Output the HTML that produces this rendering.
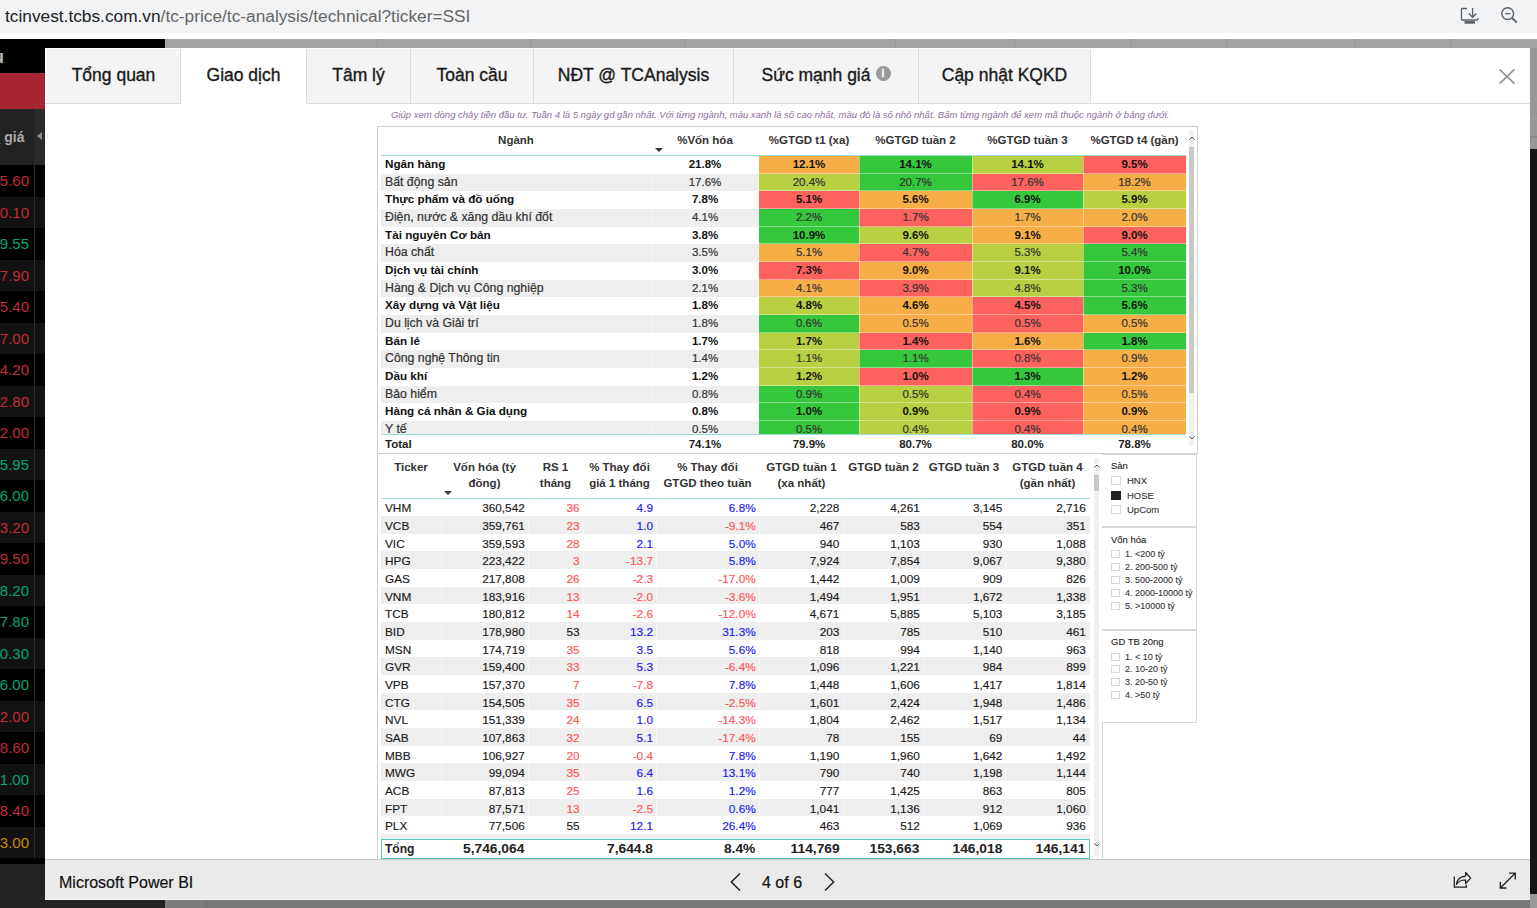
<!DOCTYPE html><html><head><meta charset="utf-8"><style>
*{box-sizing:border-box;margin:0;padding:0}
html,body{width:1537px;height:908px;overflow:hidden}
body{position:relative;background:#a4a4a4;font-family:"Liberation Sans",sans-serif;color:#222}
.abs{position:absolute}
#addr{left:0;top:0;width:1537px;height:33px;background:#f1f3f4}
#url{left:5px;top:6px;font-size:17.3px;line-height:20px;color:#666;white-space:nowrap}
#url b{font-weight:normal;color:#202124}
#wstrip{left:0;top:33px;width:1537px;height:6px;background:#fff}
#side{left:0;top:39px;width:165px;height:869px;background:#222;overflow:hidden}
.srow{position:absolute;left:0;width:165px;height:31.5px}
.snum{position:absolute;right:136px;font-size:15px;line-height:16px;top:8px;white-space:nowrap}
#modal{left:45px;top:48px;width:1485px;height:852px;background:#fff;overflow:hidden}
#tabs{left:0;top:0;width:1485px;height:56px;border-bottom:1px solid #dcdcdc}
.tab{position:absolute;top:1px;height:55px;background:#f4f4f4;border-right:1px solid #dcdcdc;border-bottom:1px solid #dcdcdc;font-size:17.5px;color:#1a1a1a;-webkit-text-stroke:0.35px #1a1a1a;text-align:center;line-height:53px;white-space:nowrap}
.tab.act{background:#fff;border-bottom-color:#fff}
#desc{left:346px;top:61px;width:780px;font-size:9.5px;font-style:italic;color:#8f6f9a;white-space:nowrap;line-height:12px}
.box{position:absolute;border:1px solid #d0d0d0;background:#fff}
table{border-collapse:collapse;table-layout:fixed}
td,th{padding:0;white-space:nowrap;overflow:hidden}
</style></head><body>
<div id="addr" class="abs"></div>
<div id="url" class="abs"><b>tcinvest.tcbs.com.vn</b>/tc-price/tc-analysis/technical?ticker=SSI</div>
<svg class="abs" style="left:1455px;top:0px" width="30" height="24" viewBox="0 0 30 24">
<path d="M12 8.5 H7.2 Q6.5 8.5 6.5 9.2 V19.3 Q6.5 20 7.2 20 H22.3 Q23 20 23 19.3 V17.8" fill="none" stroke="#5f6368" stroke-width="1.3"/>
<path d="M17.6 8 V17" stroke="#5f6368" stroke-width="1.3"/><path d="M13.8 13.5 L17.6 17.3 L21.4 13.5" fill="none" stroke="#5f6368" stroke-width="1.3"/>
<rect x="9.5" y="21" width="10.5" height="2.7" fill="#5f6368"/></svg>
<svg class="abs" style="left:1497px;top:4px" width="24" height="24" viewBox="0 0 24 24">
<circle cx="10.7" cy="9.6" r="5.9" fill="none" stroke="#5f6368" stroke-width="1.4"/><path d="M8.2 9.6 H13.2" stroke="#5f6368" stroke-width="1.4"/>
<path d="M14.9 13.8 L19.8 18.6" stroke="#5f6368" stroke-width="1.9"/></svg>
<div id="wstrip" class="abs"></div>
<div id="side" class="abs">
<div class="abs" style="left:0;top:0;width:165px;height:34px;background:#000"></div>
<div class="abs" style="left:-7px;top:8px;font-size:18px;color:#bbb;font-weight:bold">u</div>
<div class="abs" style="left:0;top:34px;width:165px;height:36px;background:linear-gradient(90deg,#a82534,#a32431 80%,#981c28)"></div>
<div class="abs" style="left:0;top:70px;width:165px;height:56px;background:#222"></div>
<div class="abs" style="left:34px;top:70px;width:131px;height:56px;background:#2a2a2a"></div>
<div class="abs" style="left:-3.5px;top:90px;font-size:14px;font-weight:bold;color:#aaa;white-space:nowrap"><span style="text-decoration:underline">i</span> giá</div>
<div class="abs" style="left:37px;top:93px;width:0;height:0;border-top:4.5px solid transparent;border-bottom:4.5px solid transparent;border-right:5px solid #888"></div>
<div class="srow" style="top:126.0px;background:#000"><span class="snum" style="color:#c22a35">5.60</span></div>
<div class="srow" style="top:157.5px;background:#121212"><span class="snum" style="color:#c22a35">0.10</span></div>
<div class="srow" style="top:189.0px;background:#000"><span class="snum" style="color:#00a577">9.55</span></div>
<div class="srow" style="top:220.5px;background:#121212"><span class="snum" style="color:#c22a35">7.90</span></div>
<div class="srow" style="top:252.0px;background:#000"><span class="snum" style="color:#c22a35">5.40</span></div>
<div class="srow" style="top:283.5px;background:#121212"><span class="snum" style="color:#c22a35">7.00</span></div>
<div class="srow" style="top:315.0px;background:#000"><span class="snum" style="color:#c22a35">4.20</span></div>
<div class="srow" style="top:346.5px;background:#121212"><span class="snum" style="color:#c22a35">2.80</span></div>
<div class="srow" style="top:378.0px;background:#000"><span class="snum" style="color:#c22a35">2.00</span></div>
<div class="srow" style="top:409.5px;background:#121212"><span class="snum" style="color:#00a577">5.95</span></div>
<div class="srow" style="top:441.0px;background:#000"><span class="snum" style="color:#00a577">6.00</span></div>
<div class="srow" style="top:472.5px;background:#121212"><span class="snum" style="color:#c22a35">3.20</span></div>
<div class="srow" style="top:504.0px;background:#000"><span class="snum" style="color:#c22a35">9.50</span></div>
<div class="srow" style="top:535.5px;background:#121212"><span class="snum" style="color:#00a577">8.20</span></div>
<div class="srow" style="top:567.0px;background:#000"><span class="snum" style="color:#00a577">7.80</span></div>
<div class="srow" style="top:598.5px;background:#121212"><span class="snum" style="color:#00a577">0.30</span></div>
<div class="srow" style="top:630.0px;background:#000"><span class="snum" style="color:#00a577">6.00</span></div>
<div class="srow" style="top:661.5px;background:#121212"><span class="snum" style="color:#c22a35">2.00</span></div>
<div class="srow" style="top:693.0px;background:#000"><span class="snum" style="color:#c22a35">8.60</span></div>
<div class="srow" style="top:724.5px;background:#121212"><span class="snum" style="color:#00a577">1.00</span></div>
<div class="srow" style="top:756.0px;background:#000"><span class="snum" style="color:#c22a35">8.40</span></div>
<div class="srow" style="top:787.5px;background:#121212"><span class="snum" style="color:#c8870e">3.00</span></div>
<div class="abs" style="left:34px;top:126px;width:1px;height:699px;background:#2b2b2b"></div>
<div class="abs" style="left:0;top:819px;width:165px;height:6px;background:#000"></div>
</div>
<div class="abs" style="left:1530px;top:48px;width:7px;height:101px;background:#979797"></div>
<div class="abs" style="left:1530px;top:149px;width:7px;height:745px;background:#151515"></div>
<div class="abs" style="left:1530px;top:113px;width:7px;height:1px;background:#8e8e8e"></div>
<div class="abs" style="left:1530px;top:136px;width:7px;height:2px;background:#8a8a8a"></div>
<div class="abs" style="left:165px;top:900px;width:1365px;height:8px;background:#777"></div>
<div class="abs" style="left:165px;top:900px;width:39px;height:8px;background:#7c7c7c"></div>
<div class="abs" style="left:1530px;top:894px;width:7px;height:14px;background:#999"></div>
<div class="abs" style="left:377px;top:39px;width:1px;height:9px;background:#999"></div>
<div class="abs" style="left:530px;top:39px;width:1px;height:9px;background:#999"></div>
<div class="abs" style="left:684px;top:39px;width:1px;height:9px;background:#999"></div>
<div class="abs" style="left:895px;top:39px;width:1px;height:9px;background:#999"></div>
<div class="abs" style="left:1014px;top:39px;width:1px;height:9px;background:#999"></div>
<div class="abs" style="left:1131px;top:39px;width:1px;height:9px;background:#999"></div>
<div class="abs" style="left:1226px;top:39px;width:1px;height:9px;background:#999"></div>
<div class="abs" style="left:1355px;top:39px;width:1px;height:9px;background:#999"></div>
<div class="abs" style="left:1450px;top:39px;width:1px;height:9px;background:#999"></div>
<div id="modal" class="abs">
<div id="tabs" class="abs"></div>
<div class="tab" style="left:2px;width:134px">Tổng quan</div>
<div class="tab act" style="left:136px;width:126px">Giao dịch</div>
<div class="tab" style="left:262px;width:104px">Tâm lý</div>
<div class="tab" style="left:366px;width:123px">Toàn cầu</div>
<div class="tab" style="left:489px;width:200px">NĐT @ TCAnalysis</div>
<div class="tab" style="left:689px;width:185px">Sức mạnh giá<span style="display:inline-block;width:15px;height:15px;border-radius:7.5px;background:#9a9a9a;color:#fff;-webkit-text-stroke:0.3px #fff;font-size:10px;line-height:15px;font-weight:bold;vertical-align:top;margin-top:17px;margin-left:5px;text-align:center">i</span></div>
<div class="tab" style="left:874px;width:172px">Cập nhật KQKD</div>
<svg class="abs" style="left:1452px;top:19px" width="20" height="20" viewBox="0 0 20 20"><path d="M2.6 2.4 L17.4 16.6 M17.4 2.4 L2.6 16.6" stroke="#999" stroke-width="1.9"/></svg>
<div id="desc" class="abs">Giúp xem dòng chảy tiền đầu tư. Tuần 4 là 5 ngày gd gần nhất. Với từng ngành, màu xanh là số cao nhất, màu đỏ là số nhỏ nhất. Bấm từng ngành để xem mã thuộc ngành ở bảng dưới.</div>
</div>
<div class="box" style="left:377px;top:126px;width:821px;height:328px"></div>
<div class="abs" style="left:381px;top:132px;width:270px;text-align:center;font-size:11.5px;line-height:16px;font-weight:bold;color:#333;white-space:nowrap">Ngành</div>
<div class="abs" style="left:651px;top:132px;width:108px;text-align:center;font-size:11.5px;line-height:16px;font-weight:bold;color:#333;white-space:nowrap">%Vốn hóa</div>
<div class="abs" style="left:759px;top:132px;width:100px;text-align:center;font-size:11.5px;line-height:16px;font-weight:bold;color:#333;white-space:nowrap">%GTGD t1 (xa)</div>
<div class="abs" style="left:859px;top:132px;width:113px;text-align:center;font-size:11.5px;line-height:16px;font-weight:bold;color:#333;white-space:nowrap">%GTGD tuần 2</div>
<div class="abs" style="left:972px;top:132px;width:111px;text-align:center;font-size:11.5px;line-height:16px;font-weight:bold;color:#333;white-space:nowrap">%GTGD tuần 3</div>
<div class="abs" style="left:1083px;top:132px;width:103px;text-align:center;font-size:11.5px;line-height:16px;font-weight:bold;color:#333;white-space:nowrap">%GTGD t4 (gần)</div>
<div class="abs" style="left:655px;top:148px;width:0;height:0;border-left:4px solid transparent;border-right:4px solid transparent;border-top:4px solid #333"></div>
<div class="abs" style="left:381px;top:155px;width:805px;height:1px;background:#9adfd9"></div>
<div class="abs" style="left:381px;top:156px;width:378px;height:18px;background:#fff;overflow:hidden"><div class="abs" style="left:4px;top:0px;font-size:11.7px;line-height:16px;font-weight:bold;color:#111;white-space:nowrap">Ngân hàng</div><div class="abs" style="left:270px;top:0;width:108px;height:100%;"><div style="text-align:center;font-size:11.5px;line-height:16px;padding-top:0px;font-weight:bold;color:#111;">21.8%</div></div><div class="abs" style="left:270px;top:0;width:1px;height:100%;background:rgba(255,255,255,0.5)"></div></div>
<div class="abs" style="left:759px;top:156px;width:100px;height:18px;background:#f8ae47;overflow:hidden;text-align:center;font-size:11.5px;line-height:16px;padding-top:0px;font-weight:bold;color:#111;">12.1%</div>
<div class="abs" style="left:859px;top:156px;width:113px;height:18px;background:#35c83c;overflow:hidden;text-align:center;font-size:11.5px;line-height:16px;padding-top:0px;font-weight:bold;color:#111;">14.1%</div>
<div class="abs" style="left:972px;top:156px;width:111px;height:18px;background:#b8d042;overflow:hidden;text-align:center;font-size:11.5px;line-height:16px;padding-top:0px;font-weight:bold;color:#111;">14.1%</div>
<div class="abs" style="left:1083px;top:156px;width:103px;height:18px;background:#fe625e;overflow:hidden;text-align:center;font-size:11.5px;line-height:16px;padding-top:0px;font-weight:bold;color:#111;">9.5%</div>
<div class="abs" style="left:759px;top:173px;width:427px;height:1px;background:rgba(255,255,255,0.4)"></div>
<div class="abs" style="left:381px;top:174px;width:378px;height:17px;background:#eeeeee;overflow:hidden"><div class="abs" style="left:4px;top:0px;font-size:12.3px;line-height:16px;font-weight:normal;color:#333;-webkit-text-stroke:0.2px #333;white-space:nowrap">Bất động sản</div><div class="abs" style="left:270px;top:0;width:108px;height:100%;"><div style="text-align:center;font-size:11.5px;line-height:16px;padding-top:0px;font-weight:normal;color:#333;-webkit-text-stroke:0.2px #333;">17.6%</div></div><div class="abs" style="left:270px;top:0;width:1px;height:100%;background:rgba(255,255,255,0.5)"></div></div>
<div class="abs" style="left:759px;top:174px;width:100px;height:17px;background:#b8d042;overflow:hidden;text-align:center;font-size:11.5px;line-height:16px;padding-top:0px;font-weight:normal;color:#333;-webkit-text-stroke:0.2px #333;">20.4%</div>
<div class="abs" style="left:859px;top:174px;width:113px;height:17px;background:#35c83c;overflow:hidden;text-align:center;font-size:11.5px;line-height:16px;padding-top:0px;font-weight:normal;color:#333;-webkit-text-stroke:0.2px #333;">20.7%</div>
<div class="abs" style="left:972px;top:174px;width:111px;height:17px;background:#fe625e;overflow:hidden;text-align:center;font-size:11.5px;line-height:16px;padding-top:0px;font-weight:normal;color:#333;-webkit-text-stroke:0.2px #333;">17.6%</div>
<div class="abs" style="left:1083px;top:174px;width:103px;height:17px;background:#f8ae47;overflow:hidden;text-align:center;font-size:11.5px;line-height:16px;padding-top:0px;font-weight:normal;color:#333;-webkit-text-stroke:0.2px #333;">18.2%</div>
<div class="abs" style="left:759px;top:190px;width:427px;height:1px;background:rgba(255,255,255,0.4)"></div>
<div class="abs" style="left:381px;top:191px;width:378px;height:18px;background:#fff;overflow:hidden"><div class="abs" style="left:4px;top:0px;font-size:11.7px;line-height:16px;font-weight:bold;color:#111;white-space:nowrap">Thực phẩm và đồ uống</div><div class="abs" style="left:270px;top:0;width:108px;height:100%;"><div style="text-align:center;font-size:11.5px;line-height:16px;padding-top:0px;font-weight:bold;color:#111;">7.8%</div></div><div class="abs" style="left:270px;top:0;width:1px;height:100%;background:rgba(255,255,255,0.5)"></div></div>
<div class="abs" style="left:759px;top:191px;width:100px;height:18px;background:#fe625e;overflow:hidden;text-align:center;font-size:11.5px;line-height:16px;padding-top:0px;font-weight:bold;color:#111;">5.1%</div>
<div class="abs" style="left:859px;top:191px;width:113px;height:18px;background:#f8ae47;overflow:hidden;text-align:center;font-size:11.5px;line-height:16px;padding-top:0px;font-weight:bold;color:#111;">5.6%</div>
<div class="abs" style="left:972px;top:191px;width:111px;height:18px;background:#35c83c;overflow:hidden;text-align:center;font-size:11.5px;line-height:16px;padding-top:0px;font-weight:bold;color:#111;">6.9%</div>
<div class="abs" style="left:1083px;top:191px;width:103px;height:18px;background:#b8d042;overflow:hidden;text-align:center;font-size:11.5px;line-height:16px;padding-top:0px;font-weight:bold;color:#111;">5.9%</div>
<div class="abs" style="left:759px;top:208px;width:427px;height:1px;background:rgba(255,255,255,0.4)"></div>
<div class="abs" style="left:381px;top:209px;width:378px;height:18px;background:#eeeeee;overflow:hidden"><div class="abs" style="left:4px;top:0px;font-size:12.3px;line-height:16px;font-weight:normal;color:#333;-webkit-text-stroke:0.2px #333;white-space:nowrap">Điện, nước & xăng dầu khí đốt</div><div class="abs" style="left:270px;top:0;width:108px;height:100%;"><div style="text-align:center;font-size:11.5px;line-height:16px;padding-top:0px;font-weight:normal;color:#333;-webkit-text-stroke:0.2px #333;">4.1%</div></div><div class="abs" style="left:270px;top:0;width:1px;height:100%;background:rgba(255,255,255,0.5)"></div></div>
<div class="abs" style="left:759px;top:209px;width:100px;height:18px;background:#35c83c;overflow:hidden;text-align:center;font-size:11.5px;line-height:16px;padding-top:0px;font-weight:normal;color:#333;-webkit-text-stroke:0.2px #333;">2.2%</div>
<div class="abs" style="left:859px;top:209px;width:113px;height:18px;background:#fe625e;overflow:hidden;text-align:center;font-size:11.5px;line-height:16px;padding-top:0px;font-weight:normal;color:#333;-webkit-text-stroke:0.2px #333;">1.7%</div>
<div class="abs" style="left:972px;top:209px;width:111px;height:18px;background:#f8ae47;overflow:hidden;text-align:center;font-size:11.5px;line-height:16px;padding-top:0px;font-weight:normal;color:#333;-webkit-text-stroke:0.2px #333;">1.7%</div>
<div class="abs" style="left:1083px;top:209px;width:103px;height:18px;background:#f8ae47;overflow:hidden;text-align:center;font-size:11.5px;line-height:16px;padding-top:0px;font-weight:normal;color:#333;-webkit-text-stroke:0.2px #333;">2.0%</div>
<div class="abs" style="left:759px;top:226px;width:427px;height:1px;background:rgba(255,255,255,0.4)"></div>
<div class="abs" style="left:381px;top:227px;width:378px;height:17px;background:#fff;overflow:hidden"><div class="abs" style="left:4px;top:0px;font-size:11.7px;line-height:16px;font-weight:bold;color:#111;white-space:nowrap">Tài nguyên Cơ bản</div><div class="abs" style="left:270px;top:0;width:108px;height:100%;"><div style="text-align:center;font-size:11.5px;line-height:16px;padding-top:0px;font-weight:bold;color:#111;">3.8%</div></div><div class="abs" style="left:270px;top:0;width:1px;height:100%;background:rgba(255,255,255,0.5)"></div></div>
<div class="abs" style="left:759px;top:227px;width:100px;height:17px;background:#35c83c;overflow:hidden;text-align:center;font-size:11.5px;line-height:16px;padding-top:0px;font-weight:bold;color:#111;">10.9%</div>
<div class="abs" style="left:859px;top:227px;width:113px;height:17px;background:#b8d042;overflow:hidden;text-align:center;font-size:11.5px;line-height:16px;padding-top:0px;font-weight:bold;color:#111;">9.6%</div>
<div class="abs" style="left:972px;top:227px;width:111px;height:17px;background:#f8ae47;overflow:hidden;text-align:center;font-size:11.5px;line-height:16px;padding-top:0px;font-weight:bold;color:#111;">9.1%</div>
<div class="abs" style="left:1083px;top:227px;width:103px;height:17px;background:#fe625e;overflow:hidden;text-align:center;font-size:11.5px;line-height:16px;padding-top:0px;font-weight:bold;color:#111;">9.0%</div>
<div class="abs" style="left:759px;top:243px;width:427px;height:1px;background:rgba(255,255,255,0.4)"></div>
<div class="abs" style="left:381px;top:244px;width:378px;height:18px;background:#eeeeee;overflow:hidden"><div class="abs" style="left:4px;top:0px;font-size:12.3px;line-height:16px;font-weight:normal;color:#333;-webkit-text-stroke:0.2px #333;white-space:nowrap">Hóa chất</div><div class="abs" style="left:270px;top:0;width:108px;height:100%;"><div style="text-align:center;font-size:11.5px;line-height:16px;padding-top:0px;font-weight:normal;color:#333;-webkit-text-stroke:0.2px #333;">3.5%</div></div><div class="abs" style="left:270px;top:0;width:1px;height:100%;background:rgba(255,255,255,0.5)"></div></div>
<div class="abs" style="left:759px;top:244px;width:100px;height:18px;background:#f8ae47;overflow:hidden;text-align:center;font-size:11.5px;line-height:16px;padding-top:0px;font-weight:normal;color:#333;-webkit-text-stroke:0.2px #333;">5.1%</div>
<div class="abs" style="left:859px;top:244px;width:113px;height:18px;background:#fe625e;overflow:hidden;text-align:center;font-size:11.5px;line-height:16px;padding-top:0px;font-weight:normal;color:#333;-webkit-text-stroke:0.2px #333;">4.7%</div>
<div class="abs" style="left:972px;top:244px;width:111px;height:18px;background:#b8d042;overflow:hidden;text-align:center;font-size:11.5px;line-height:16px;padding-top:0px;font-weight:normal;color:#333;-webkit-text-stroke:0.2px #333;">5.3%</div>
<div class="abs" style="left:1083px;top:244px;width:103px;height:18px;background:#35c83c;overflow:hidden;text-align:center;font-size:11.5px;line-height:16px;padding-top:0px;font-weight:normal;color:#333;-webkit-text-stroke:0.2px #333;">5.4%</div>
<div class="abs" style="left:759px;top:261px;width:427px;height:1px;background:rgba(255,255,255,0.4)"></div>
<div class="abs" style="left:381px;top:262px;width:378px;height:18px;background:#fff;overflow:hidden"><div class="abs" style="left:4px;top:0px;font-size:11.7px;line-height:16px;font-weight:bold;color:#111;white-space:nowrap">Dịch vụ tài chính</div><div class="abs" style="left:270px;top:0;width:108px;height:100%;"><div style="text-align:center;font-size:11.5px;line-height:16px;padding-top:0px;font-weight:bold;color:#111;">3.0%</div></div><div class="abs" style="left:270px;top:0;width:1px;height:100%;background:rgba(255,255,255,0.5)"></div></div>
<div class="abs" style="left:759px;top:262px;width:100px;height:18px;background:#fe625e;overflow:hidden;text-align:center;font-size:11.5px;line-height:16px;padding-top:0px;font-weight:bold;color:#111;">7.3%</div>
<div class="abs" style="left:859px;top:262px;width:113px;height:18px;background:#f8ae47;overflow:hidden;text-align:center;font-size:11.5px;line-height:16px;padding-top:0px;font-weight:bold;color:#111;">9.0%</div>
<div class="abs" style="left:972px;top:262px;width:111px;height:18px;background:#b8d042;overflow:hidden;text-align:center;font-size:11.5px;line-height:16px;padding-top:0px;font-weight:bold;color:#111;">9.1%</div>
<div class="abs" style="left:1083px;top:262px;width:103px;height:18px;background:#35c83c;overflow:hidden;text-align:center;font-size:11.5px;line-height:16px;padding-top:0px;font-weight:bold;color:#111;">10.0%</div>
<div class="abs" style="left:759px;top:279px;width:427px;height:1px;background:rgba(255,255,255,0.4)"></div>
<div class="abs" style="left:381px;top:280px;width:378px;height:17px;background:#eeeeee;overflow:hidden"><div class="abs" style="left:4px;top:0px;font-size:12.3px;line-height:16px;font-weight:normal;color:#333;-webkit-text-stroke:0.2px #333;white-space:nowrap">Hàng & Dịch vụ Công nghiệp</div><div class="abs" style="left:270px;top:0;width:108px;height:100%;"><div style="text-align:center;font-size:11.5px;line-height:16px;padding-top:0px;font-weight:normal;color:#333;-webkit-text-stroke:0.2px #333;">2.1%</div></div><div class="abs" style="left:270px;top:0;width:1px;height:100%;background:rgba(255,255,255,0.5)"></div></div>
<div class="abs" style="left:759px;top:280px;width:100px;height:17px;background:#f8ae47;overflow:hidden;text-align:center;font-size:11.5px;line-height:16px;padding-top:0px;font-weight:normal;color:#333;-webkit-text-stroke:0.2px #333;">4.1%</div>
<div class="abs" style="left:859px;top:280px;width:113px;height:17px;background:#fe625e;overflow:hidden;text-align:center;font-size:11.5px;line-height:16px;padding-top:0px;font-weight:normal;color:#333;-webkit-text-stroke:0.2px #333;">3.9%</div>
<div class="abs" style="left:972px;top:280px;width:111px;height:17px;background:#b8d042;overflow:hidden;text-align:center;font-size:11.5px;line-height:16px;padding-top:0px;font-weight:normal;color:#333;-webkit-text-stroke:0.2px #333;">4.8%</div>
<div class="abs" style="left:1083px;top:280px;width:103px;height:17px;background:#35c83c;overflow:hidden;text-align:center;font-size:11.5px;line-height:16px;padding-top:0px;font-weight:normal;color:#333;-webkit-text-stroke:0.2px #333;">5.3%</div>
<div class="abs" style="left:759px;top:296px;width:427px;height:1px;background:rgba(255,255,255,0.4)"></div>
<div class="abs" style="left:381px;top:297px;width:378px;height:18px;background:#fff;overflow:hidden"><div class="abs" style="left:4px;top:0px;font-size:11.7px;line-height:16px;font-weight:bold;color:#111;white-space:nowrap">Xây dựng và Vật liệu</div><div class="abs" style="left:270px;top:0;width:108px;height:100%;"><div style="text-align:center;font-size:11.5px;line-height:16px;padding-top:0px;font-weight:bold;color:#111;">1.8%</div></div><div class="abs" style="left:270px;top:0;width:1px;height:100%;background:rgba(255,255,255,0.5)"></div></div>
<div class="abs" style="left:759px;top:297px;width:100px;height:18px;background:#b8d042;overflow:hidden;text-align:center;font-size:11.5px;line-height:16px;padding-top:0px;font-weight:bold;color:#111;">4.8%</div>
<div class="abs" style="left:859px;top:297px;width:113px;height:18px;background:#f8ae47;overflow:hidden;text-align:center;font-size:11.5px;line-height:16px;padding-top:0px;font-weight:bold;color:#111;">4.6%</div>
<div class="abs" style="left:972px;top:297px;width:111px;height:18px;background:#fe625e;overflow:hidden;text-align:center;font-size:11.5px;line-height:16px;padding-top:0px;font-weight:bold;color:#111;">4.5%</div>
<div class="abs" style="left:1083px;top:297px;width:103px;height:18px;background:#35c83c;overflow:hidden;text-align:center;font-size:11.5px;line-height:16px;padding-top:0px;font-weight:bold;color:#111;">5.6%</div>
<div class="abs" style="left:759px;top:314px;width:427px;height:1px;background:rgba(255,255,255,0.4)"></div>
<div class="abs" style="left:381px;top:315px;width:378px;height:18px;background:#eeeeee;overflow:hidden"><div class="abs" style="left:4px;top:0px;font-size:12.3px;line-height:16px;font-weight:normal;color:#333;-webkit-text-stroke:0.2px #333;white-space:nowrap">Du lịch và Giải trí</div><div class="abs" style="left:270px;top:0;width:108px;height:100%;"><div style="text-align:center;font-size:11.5px;line-height:16px;padding-top:0px;font-weight:normal;color:#333;-webkit-text-stroke:0.2px #333;">1.8%</div></div><div class="abs" style="left:270px;top:0;width:1px;height:100%;background:rgba(255,255,255,0.5)"></div></div>
<div class="abs" style="left:759px;top:315px;width:100px;height:18px;background:#35c83c;overflow:hidden;text-align:center;font-size:11.5px;line-height:16px;padding-top:0px;font-weight:normal;color:#333;-webkit-text-stroke:0.2px #333;">0.6%</div>
<div class="abs" style="left:859px;top:315px;width:113px;height:18px;background:#f8ae47;overflow:hidden;text-align:center;font-size:11.5px;line-height:16px;padding-top:0px;font-weight:normal;color:#333;-webkit-text-stroke:0.2px #333;">0.5%</div>
<div class="abs" style="left:972px;top:315px;width:111px;height:18px;background:#fe625e;overflow:hidden;text-align:center;font-size:11.5px;line-height:16px;padding-top:0px;font-weight:normal;color:#333;-webkit-text-stroke:0.2px #333;">0.5%</div>
<div class="abs" style="left:1083px;top:315px;width:103px;height:18px;background:#f8ae47;overflow:hidden;text-align:center;font-size:11.5px;line-height:16px;padding-top:0px;font-weight:normal;color:#333;-webkit-text-stroke:0.2px #333;">0.5%</div>
<div class="abs" style="left:759px;top:332px;width:427px;height:1px;background:rgba(255,255,255,0.4)"></div>
<div class="abs" style="left:381px;top:333px;width:378px;height:17px;background:#fff;overflow:hidden"><div class="abs" style="left:4px;top:0px;font-size:11.7px;line-height:16px;font-weight:bold;color:#111;white-space:nowrap">Bán lẻ</div><div class="abs" style="left:270px;top:0;width:108px;height:100%;"><div style="text-align:center;font-size:11.5px;line-height:16px;padding-top:0px;font-weight:bold;color:#111;">1.7%</div></div><div class="abs" style="left:270px;top:0;width:1px;height:100%;background:rgba(255,255,255,0.5)"></div></div>
<div class="abs" style="left:759px;top:333px;width:100px;height:17px;background:#b8d042;overflow:hidden;text-align:center;font-size:11.5px;line-height:16px;padding-top:0px;font-weight:bold;color:#111;">1.7%</div>
<div class="abs" style="left:859px;top:333px;width:113px;height:17px;background:#fe625e;overflow:hidden;text-align:center;font-size:11.5px;line-height:16px;padding-top:0px;font-weight:bold;color:#111;">1.4%</div>
<div class="abs" style="left:972px;top:333px;width:111px;height:17px;background:#f8ae47;overflow:hidden;text-align:center;font-size:11.5px;line-height:16px;padding-top:0px;font-weight:bold;color:#111;">1.6%</div>
<div class="abs" style="left:1083px;top:333px;width:103px;height:17px;background:#35c83c;overflow:hidden;text-align:center;font-size:11.5px;line-height:16px;padding-top:0px;font-weight:bold;color:#111;">1.8%</div>
<div class="abs" style="left:759px;top:349px;width:427px;height:1px;background:rgba(255,255,255,0.4)"></div>
<div class="abs" style="left:381px;top:350px;width:378px;height:18px;background:#eeeeee;overflow:hidden"><div class="abs" style="left:4px;top:0px;font-size:12.3px;line-height:16px;font-weight:normal;color:#333;-webkit-text-stroke:0.2px #333;white-space:nowrap">Công nghệ Thông tin</div><div class="abs" style="left:270px;top:0;width:108px;height:100%;"><div style="text-align:center;font-size:11.5px;line-height:16px;padding-top:0px;font-weight:normal;color:#333;-webkit-text-stroke:0.2px #333;">1.4%</div></div><div class="abs" style="left:270px;top:0;width:1px;height:100%;background:rgba(255,255,255,0.5)"></div></div>
<div class="abs" style="left:759px;top:350px;width:100px;height:18px;background:#b8d042;overflow:hidden;text-align:center;font-size:11.5px;line-height:16px;padding-top:0px;font-weight:normal;color:#333;-webkit-text-stroke:0.2px #333;">1.1%</div>
<div class="abs" style="left:859px;top:350px;width:113px;height:18px;background:#35c83c;overflow:hidden;text-align:center;font-size:11.5px;line-height:16px;padding-top:0px;font-weight:normal;color:#333;-webkit-text-stroke:0.2px #333;">1.1%</div>
<div class="abs" style="left:972px;top:350px;width:111px;height:18px;background:#fe625e;overflow:hidden;text-align:center;font-size:11.5px;line-height:16px;padding-top:0px;font-weight:normal;color:#333;-webkit-text-stroke:0.2px #333;">0.8%</div>
<div class="abs" style="left:1083px;top:350px;width:103px;height:18px;background:#f8ae47;overflow:hidden;text-align:center;font-size:11.5px;line-height:16px;padding-top:0px;font-weight:normal;color:#333;-webkit-text-stroke:0.2px #333;">0.9%</div>
<div class="abs" style="left:759px;top:367px;width:427px;height:1px;background:rgba(255,255,255,0.4)"></div>
<div class="abs" style="left:381px;top:368px;width:378px;height:18px;background:#fff;overflow:hidden"><div class="abs" style="left:4px;top:0px;font-size:11.7px;line-height:16px;font-weight:bold;color:#111;white-space:nowrap">Dầu khí</div><div class="abs" style="left:270px;top:0;width:108px;height:100%;"><div style="text-align:center;font-size:11.5px;line-height:16px;padding-top:0px;font-weight:bold;color:#111;">1.2%</div></div><div class="abs" style="left:270px;top:0;width:1px;height:100%;background:rgba(255,255,255,0.5)"></div></div>
<div class="abs" style="left:759px;top:368px;width:100px;height:18px;background:#b8d042;overflow:hidden;text-align:center;font-size:11.5px;line-height:16px;padding-top:0px;font-weight:bold;color:#111;">1.2%</div>
<div class="abs" style="left:859px;top:368px;width:113px;height:18px;background:#fe625e;overflow:hidden;text-align:center;font-size:11.5px;line-height:16px;padding-top:0px;font-weight:bold;color:#111;">1.0%</div>
<div class="abs" style="left:972px;top:368px;width:111px;height:18px;background:#35c83c;overflow:hidden;text-align:center;font-size:11.5px;line-height:16px;padding-top:0px;font-weight:bold;color:#111;">1.3%</div>
<div class="abs" style="left:1083px;top:368px;width:103px;height:18px;background:#f8ae47;overflow:hidden;text-align:center;font-size:11.5px;line-height:16px;padding-top:0px;font-weight:bold;color:#111;">1.2%</div>
<div class="abs" style="left:759px;top:385px;width:427px;height:1px;background:rgba(255,255,255,0.4)"></div>
<div class="abs" style="left:381px;top:386px;width:378px;height:17px;background:#eeeeee;overflow:hidden"><div class="abs" style="left:4px;top:0px;font-size:12.3px;line-height:16px;font-weight:normal;color:#333;-webkit-text-stroke:0.2px #333;white-space:nowrap">Bảo hiểm</div><div class="abs" style="left:270px;top:0;width:108px;height:100%;"><div style="text-align:center;font-size:11.5px;line-height:16px;padding-top:0px;font-weight:normal;color:#333;-webkit-text-stroke:0.2px #333;">0.8%</div></div><div class="abs" style="left:270px;top:0;width:1px;height:100%;background:rgba(255,255,255,0.5)"></div></div>
<div class="abs" style="left:759px;top:386px;width:100px;height:17px;background:#35c83c;overflow:hidden;text-align:center;font-size:11.5px;line-height:16px;padding-top:0px;font-weight:normal;color:#333;-webkit-text-stroke:0.2px #333;">0.9%</div>
<div class="abs" style="left:859px;top:386px;width:113px;height:17px;background:#b8d042;overflow:hidden;text-align:center;font-size:11.5px;line-height:16px;padding-top:0px;font-weight:normal;color:#333;-webkit-text-stroke:0.2px #333;">0.5%</div>
<div class="abs" style="left:972px;top:386px;width:111px;height:17px;background:#fe625e;overflow:hidden;text-align:center;font-size:11.5px;line-height:16px;padding-top:0px;font-weight:normal;color:#333;-webkit-text-stroke:0.2px #333;">0.4%</div>
<div class="abs" style="left:1083px;top:386px;width:103px;height:17px;background:#f8ae47;overflow:hidden;text-align:center;font-size:11.5px;line-height:16px;padding-top:0px;font-weight:normal;color:#333;-webkit-text-stroke:0.2px #333;">0.5%</div>
<div class="abs" style="left:759px;top:402px;width:427px;height:1px;background:rgba(255,255,255,0.4)"></div>
<div class="abs" style="left:381px;top:403px;width:378px;height:18px;background:#fff;overflow:hidden"><div class="abs" style="left:4px;top:0px;font-size:11.7px;line-height:16px;font-weight:bold;color:#111;white-space:nowrap">Hàng cá nhân & Gia dụng</div><div class="abs" style="left:270px;top:0;width:108px;height:100%;"><div style="text-align:center;font-size:11.5px;line-height:16px;padding-top:0px;font-weight:bold;color:#111;">0.8%</div></div><div class="abs" style="left:270px;top:0;width:1px;height:100%;background:rgba(255,255,255,0.5)"></div></div>
<div class="abs" style="left:759px;top:403px;width:100px;height:18px;background:#35c83c;overflow:hidden;text-align:center;font-size:11.5px;line-height:16px;padding-top:0px;font-weight:bold;color:#111;">1.0%</div>
<div class="abs" style="left:859px;top:403px;width:113px;height:18px;background:#b8d042;overflow:hidden;text-align:center;font-size:11.5px;line-height:16px;padding-top:0px;font-weight:bold;color:#111;">0.9%</div>
<div class="abs" style="left:972px;top:403px;width:111px;height:18px;background:#fe625e;overflow:hidden;text-align:center;font-size:11.5px;line-height:16px;padding-top:0px;font-weight:bold;color:#111;">0.9%</div>
<div class="abs" style="left:1083px;top:403px;width:103px;height:18px;background:#f8ae47;overflow:hidden;text-align:center;font-size:11.5px;line-height:16px;padding-top:0px;font-weight:bold;color:#111;">0.9%</div>
<div class="abs" style="left:759px;top:420px;width:427px;height:1px;background:rgba(255,255,255,0.4)"></div>
<div class="abs" style="left:381px;top:421px;width:378px;height:13px;background:#eeeeee;overflow:hidden"><div class="abs" style="left:4px;top:0px;font-size:12.3px;line-height:16px;font-weight:normal;color:#333;-webkit-text-stroke:0.2px #333;white-space:nowrap">Y tế</div><div class="abs" style="left:270px;top:0;width:108px;height:100%;"><div style="text-align:center;font-size:11.5px;line-height:16px;padding-top:0px;font-weight:normal;color:#333;-webkit-text-stroke:0.2px #333;">0.5%</div></div><div class="abs" style="left:270px;top:0;width:1px;height:100%;background:rgba(255,255,255,0.5)"></div></div>
<div class="abs" style="left:759px;top:421px;width:100px;height:13px;background:#35c83c;overflow:hidden;text-align:center;font-size:11.5px;line-height:16px;padding-top:0px;font-weight:normal;color:#333;-webkit-text-stroke:0.2px #333;">0.5%</div>
<div class="abs" style="left:859px;top:421px;width:113px;height:13px;background:#b8d042;overflow:hidden;text-align:center;font-size:11.5px;line-height:16px;padding-top:0px;font-weight:normal;color:#333;-webkit-text-stroke:0.2px #333;">0.4%</div>
<div class="abs" style="left:972px;top:421px;width:111px;height:13px;background:#fe625e;overflow:hidden;text-align:center;font-size:11.5px;line-height:16px;padding-top:0px;font-weight:normal;color:#333;-webkit-text-stroke:0.2px #333;">0.4%</div>
<div class="abs" style="left:1083px;top:421px;width:103px;height:13px;background:#f8ae47;overflow:hidden;text-align:center;font-size:11.5px;line-height:16px;padding-top:0px;font-weight:normal;color:#333;-webkit-text-stroke:0.2px #333;">0.4%</div>
<div class="abs" style="left:859px;top:156px;width:1px;height:278px;background:rgba(255,255,255,0.4)"></div>
<div class="abs" style="left:972px;top:156px;width:1px;height:278px;background:rgba(255,255,255,0.4)"></div>
<div class="abs" style="left:1083px;top:156px;width:1px;height:278px;background:rgba(255,255,255,0.4)"></div>
<div class="abs" style="left:381px;top:434px;width:805px;height:1px;background:#9adfd9"></div>
<div class="abs" style="left:381px;top:436px;width:270px;text-align:left;padding-left:4px;font-size:11.5px;line-height:16px;font-weight:bold;color:#222;white-space:nowrap">Total</div>
<div class="abs" style="left:651px;top:436px;width:108px;text-align:center;font-size:11.5px;line-height:16px;font-weight:bold;color:#222;white-space:nowrap">74.1%</div>
<div class="abs" style="left:759px;top:436px;width:100px;text-align:center;font-size:11.5px;line-height:16px;font-weight:bold;color:#222;white-space:nowrap">79.9%</div>
<div class="abs" style="left:859px;top:436px;width:113px;text-align:center;font-size:11.5px;line-height:16px;font-weight:bold;color:#222;white-space:nowrap">80.7%</div>
<div class="abs" style="left:972px;top:436px;width:111px;text-align:center;font-size:11.5px;line-height:16px;font-weight:bold;color:#222;white-space:nowrap">80.0%</div>
<div class="abs" style="left:1083px;top:436px;width:103px;text-align:center;font-size:11.5px;line-height:16px;font-weight:bold;color:#222;white-space:nowrap">78.8%</div>
<div class="abs" style="left:1189px;top:130px;width:5px;height:316px;background:#f0f0f0"></div>
<div class="abs" style="left:1189px;top:147px;width:5px;height:246px;background:#c8c8c8"></div>
<svg class="abs" style="left:1189px;top:136px" width="6" height="4" viewBox="0 0 6 4"><path d="M0.5 3.5 L3 1 L5.5 3.5" fill="none" stroke="#555" stroke-width="1"/></svg>
<svg class="abs" style="left:1189px;top:436px" width="6" height="4" viewBox="0 0 6 4"><path d="M0.5 0.5 L3 3 L5.5 0.5" fill="none" stroke="#555" stroke-width="1"/></svg>
<div class="abs" style="left:377px;top:454px;width:1px;height:405px;background:#d0d0d0"></div>
<div class="abs" style="left:1102px;top:454px;width:1px;height:405px;background:#d8d8d8"></div>
<div class="abs" style="left:381px;top:459px;width:60px;text-align:center;font-size:11.5px;line-height:16px;font-weight:bold;color:#333;white-space:nowrap">Ticker</div>
<div class="abs" style="left:441px;top:459px;width:87px;text-align:center;font-size:11.5px;line-height:16px;font-weight:bold;color:#333;white-space:nowrap">Vốn hóa (tỷ<br>đồng)</div>
<div class="abs" style="left:528px;top:459px;width:55px;text-align:center;font-size:11.5px;line-height:16px;font-weight:bold;color:#333;white-space:nowrap">RS 1<br>tháng</div>
<div class="abs" style="left:583px;top:459px;width:73px;text-align:center;font-size:11.5px;line-height:16px;font-weight:bold;color:#333;white-space:nowrap">% Thay đổi<br>giá 1 tháng</div>
<div class="abs" style="left:656px;top:459px;width:103px;text-align:center;font-size:11.5px;line-height:16px;font-weight:bold;color:#333;white-space:nowrap">% Thay đổi<br>GTGD theo tuần</div>
<div class="abs" style="left:759px;top:459px;width:85px;text-align:center;font-size:11.5px;line-height:16px;font-weight:bold;color:#333;white-space:nowrap">GTGD tuần 1<br>(xa nhất)</div>
<div class="abs" style="left:844px;top:459px;width:79px;text-align:center;font-size:11.5px;line-height:16px;font-weight:bold;color:#333;white-space:nowrap">GTGD tuần 2</div>
<div class="abs" style="left:923px;top:459px;width:82px;text-align:center;font-size:11.5px;line-height:16px;font-weight:bold;color:#333;white-space:nowrap">GTGD tuần 3</div>
<div class="abs" style="left:1005px;top:459px;width:85px;text-align:center;font-size:11.5px;line-height:16px;font-weight:bold;color:#333;white-space:nowrap">GTGD tuần 4<br>(gần nhất)</div>
<div class="abs" style="left:444px;top:491px;width:0;height:0;border-left:4px solid transparent;border-right:4px solid transparent;border-top:4px solid #333"></div>
<div class="abs" style="left:381px;top:498px;width:709px;height:18px;background:#fff"></div>
<div class="abs" style="left:381px;top:500px;width:60px;text-align:left;padding-left:4px;font-size:11.8px;line-height:16px;color:#1a1a1a;-webkit-text-stroke:0.15px #1a1a1a;white-space:nowrap">VHM</div>
<div class="abs" style="left:441px;top:500px;width:87px;text-align:right;padding-right:3.2px;font-size:11.8px;line-height:16px;color:#1a1a1a;-webkit-text-stroke:0.15px #1a1a1a;white-space:nowrap">360,542</div>
<div class="abs" style="left:528px;top:500px;width:55px;text-align:right;padding-right:3.5px;font-size:11.8px;line-height:16px;color:#ff5656;-webkit-text-stroke:0.15px #ff5656;white-space:nowrap">36</div>
<div class="abs" style="left:583px;top:500px;width:73px;text-align:right;padding-right:3.0px;font-size:11.8px;line-height:16px;color:#2020f0;-webkit-text-stroke:0.15px #2020f0;white-space:nowrap">4.9</div>
<div class="abs" style="left:656px;top:500px;width:103px;text-align:right;padding-right:3.3px;font-size:11.8px;line-height:16px;color:#2020f0;-webkit-text-stroke:0.15px #2020f0;white-space:nowrap">6.8%</div>
<div class="abs" style="left:759px;top:500px;width:85px;text-align:right;padding-right:4.7px;font-size:11.8px;line-height:16px;color:#1a1a1a;-webkit-text-stroke:0.15px #1a1a1a;white-space:nowrap">2,228</div>
<div class="abs" style="left:844px;top:500px;width:79px;text-align:right;padding-right:3.2px;font-size:11.8px;line-height:16px;color:#1a1a1a;-webkit-text-stroke:0.15px #1a1a1a;white-space:nowrap">4,261</div>
<div class="abs" style="left:923px;top:500px;width:82px;text-align:right;padding-right:2.6px;font-size:11.8px;line-height:16px;color:#1a1a1a;-webkit-text-stroke:0.15px #1a1a1a;white-space:nowrap">3,145</div>
<div class="abs" style="left:1005px;top:500px;width:85px;text-align:right;padding-right:4.2px;font-size:11.8px;line-height:16px;color:#1a1a1a;-webkit-text-stroke:0.15px #1a1a1a;white-space:nowrap">2,716</div>
<div class="abs" style="left:381px;top:516px;width:709px;height:18px;background:#eeeeee"></div>
<div class="abs" style="left:381px;top:518px;width:60px;text-align:left;padding-left:4px;font-size:11.8px;line-height:16px;color:#1a1a1a;-webkit-text-stroke:0.15px #1a1a1a;white-space:nowrap">VCB</div>
<div class="abs" style="left:441px;top:518px;width:87px;text-align:right;padding-right:3.2px;font-size:11.8px;line-height:16px;color:#1a1a1a;-webkit-text-stroke:0.15px #1a1a1a;white-space:nowrap">359,761</div>
<div class="abs" style="left:528px;top:518px;width:55px;text-align:right;padding-right:3.5px;font-size:11.8px;line-height:16px;color:#ff5656;-webkit-text-stroke:0.15px #ff5656;white-space:nowrap">23</div>
<div class="abs" style="left:583px;top:518px;width:73px;text-align:right;padding-right:3.0px;font-size:11.8px;line-height:16px;color:#2020f0;-webkit-text-stroke:0.15px #2020f0;white-space:nowrap">1.0</div>
<div class="abs" style="left:656px;top:518px;width:103px;text-align:right;padding-right:3.3px;font-size:11.8px;line-height:16px;color:#ff5656;-webkit-text-stroke:0.15px #ff5656;white-space:nowrap">-9.1%</div>
<div class="abs" style="left:759px;top:518px;width:85px;text-align:right;padding-right:4.7px;font-size:11.8px;line-height:16px;color:#1a1a1a;-webkit-text-stroke:0.15px #1a1a1a;white-space:nowrap">467</div>
<div class="abs" style="left:844px;top:518px;width:79px;text-align:right;padding-right:3.2px;font-size:11.8px;line-height:16px;color:#1a1a1a;-webkit-text-stroke:0.15px #1a1a1a;white-space:nowrap">583</div>
<div class="abs" style="left:923px;top:518px;width:82px;text-align:right;padding-right:2.6px;font-size:11.8px;line-height:16px;color:#1a1a1a;-webkit-text-stroke:0.15px #1a1a1a;white-space:nowrap">554</div>
<div class="abs" style="left:1005px;top:518px;width:85px;text-align:right;padding-right:4.2px;font-size:11.8px;line-height:16px;color:#1a1a1a;-webkit-text-stroke:0.15px #1a1a1a;white-space:nowrap">351</div>
<div class="abs" style="left:441px;top:516px;width:1px;height:18px;background:#f6f6f6"></div>
<div class="abs" style="left:528px;top:516px;width:1px;height:18px;background:#f6f6f6"></div>
<div class="abs" style="left:583px;top:516px;width:1px;height:18px;background:#f6f6f6"></div>
<div class="abs" style="left:656px;top:516px;width:1px;height:18px;background:#f6f6f6"></div>
<div class="abs" style="left:759px;top:516px;width:1px;height:18px;background:#f6f6f6"></div>
<div class="abs" style="left:844px;top:516px;width:1px;height:18px;background:#f6f6f6"></div>
<div class="abs" style="left:923px;top:516px;width:1px;height:18px;background:#f6f6f6"></div>
<div class="abs" style="left:1005px;top:516px;width:1px;height:18px;background:#f6f6f6"></div>
<div class="abs" style="left:381px;top:534px;width:709px;height:17px;background:#fff"></div>
<div class="abs" style="left:381px;top:536px;width:60px;text-align:left;padding-left:4px;font-size:11.8px;line-height:16px;color:#1a1a1a;-webkit-text-stroke:0.15px #1a1a1a;white-space:nowrap">VIC</div>
<div class="abs" style="left:441px;top:536px;width:87px;text-align:right;padding-right:3.2px;font-size:11.8px;line-height:16px;color:#1a1a1a;-webkit-text-stroke:0.15px #1a1a1a;white-space:nowrap">359,593</div>
<div class="abs" style="left:528px;top:536px;width:55px;text-align:right;padding-right:3.5px;font-size:11.8px;line-height:16px;color:#ff5656;-webkit-text-stroke:0.15px #ff5656;white-space:nowrap">28</div>
<div class="abs" style="left:583px;top:536px;width:73px;text-align:right;padding-right:3.0px;font-size:11.8px;line-height:16px;color:#2020f0;-webkit-text-stroke:0.15px #2020f0;white-space:nowrap">2.1</div>
<div class="abs" style="left:656px;top:536px;width:103px;text-align:right;padding-right:3.3px;font-size:11.8px;line-height:16px;color:#2020f0;-webkit-text-stroke:0.15px #2020f0;white-space:nowrap">5.0%</div>
<div class="abs" style="left:759px;top:536px;width:85px;text-align:right;padding-right:4.7px;font-size:11.8px;line-height:16px;color:#1a1a1a;-webkit-text-stroke:0.15px #1a1a1a;white-space:nowrap">940</div>
<div class="abs" style="left:844px;top:536px;width:79px;text-align:right;padding-right:3.2px;font-size:11.8px;line-height:16px;color:#1a1a1a;-webkit-text-stroke:0.15px #1a1a1a;white-space:nowrap">1,103</div>
<div class="abs" style="left:923px;top:536px;width:82px;text-align:right;padding-right:2.6px;font-size:11.8px;line-height:16px;color:#1a1a1a;-webkit-text-stroke:0.15px #1a1a1a;white-space:nowrap">930</div>
<div class="abs" style="left:1005px;top:536px;width:85px;text-align:right;padding-right:4.2px;font-size:11.8px;line-height:16px;color:#1a1a1a;-webkit-text-stroke:0.15px #1a1a1a;white-space:nowrap">1,088</div>
<div class="abs" style="left:381px;top:551px;width:709px;height:18px;background:#eeeeee"></div>
<div class="abs" style="left:381px;top:553px;width:60px;text-align:left;padding-left:4px;font-size:11.8px;line-height:16px;color:#1a1a1a;-webkit-text-stroke:0.15px #1a1a1a;white-space:nowrap">HPG</div>
<div class="abs" style="left:441px;top:553px;width:87px;text-align:right;padding-right:3.2px;font-size:11.8px;line-height:16px;color:#1a1a1a;-webkit-text-stroke:0.15px #1a1a1a;white-space:nowrap">223,422</div>
<div class="abs" style="left:528px;top:553px;width:55px;text-align:right;padding-right:3.5px;font-size:11.8px;line-height:16px;color:#ff5656;-webkit-text-stroke:0.15px #ff5656;white-space:nowrap">3</div>
<div class="abs" style="left:583px;top:553px;width:73px;text-align:right;padding-right:3.0px;font-size:11.8px;line-height:16px;color:#ff5656;-webkit-text-stroke:0.15px #ff5656;white-space:nowrap">-13.7</div>
<div class="abs" style="left:656px;top:553px;width:103px;text-align:right;padding-right:3.3px;font-size:11.8px;line-height:16px;color:#2020f0;-webkit-text-stroke:0.15px #2020f0;white-space:nowrap">5.8%</div>
<div class="abs" style="left:759px;top:553px;width:85px;text-align:right;padding-right:4.7px;font-size:11.8px;line-height:16px;color:#1a1a1a;-webkit-text-stroke:0.15px #1a1a1a;white-space:nowrap">7,924</div>
<div class="abs" style="left:844px;top:553px;width:79px;text-align:right;padding-right:3.2px;font-size:11.8px;line-height:16px;color:#1a1a1a;-webkit-text-stroke:0.15px #1a1a1a;white-space:nowrap">7,854</div>
<div class="abs" style="left:923px;top:553px;width:82px;text-align:right;padding-right:2.6px;font-size:11.8px;line-height:16px;color:#1a1a1a;-webkit-text-stroke:0.15px #1a1a1a;white-space:nowrap">9,067</div>
<div class="abs" style="left:1005px;top:553px;width:85px;text-align:right;padding-right:4.2px;font-size:11.8px;line-height:16px;color:#1a1a1a;-webkit-text-stroke:0.15px #1a1a1a;white-space:nowrap">9,380</div>
<div class="abs" style="left:441px;top:551px;width:1px;height:18px;background:#f6f6f6"></div>
<div class="abs" style="left:528px;top:551px;width:1px;height:18px;background:#f6f6f6"></div>
<div class="abs" style="left:583px;top:551px;width:1px;height:18px;background:#f6f6f6"></div>
<div class="abs" style="left:656px;top:551px;width:1px;height:18px;background:#f6f6f6"></div>
<div class="abs" style="left:759px;top:551px;width:1px;height:18px;background:#f6f6f6"></div>
<div class="abs" style="left:844px;top:551px;width:1px;height:18px;background:#f6f6f6"></div>
<div class="abs" style="left:923px;top:551px;width:1px;height:18px;background:#f6f6f6"></div>
<div class="abs" style="left:1005px;top:551px;width:1px;height:18px;background:#f6f6f6"></div>
<div class="abs" style="left:381px;top:569px;width:709px;height:18px;background:#fff"></div>
<div class="abs" style="left:381px;top:571px;width:60px;text-align:left;padding-left:4px;font-size:11.8px;line-height:16px;color:#1a1a1a;-webkit-text-stroke:0.15px #1a1a1a;white-space:nowrap">GAS</div>
<div class="abs" style="left:441px;top:571px;width:87px;text-align:right;padding-right:3.2px;font-size:11.8px;line-height:16px;color:#1a1a1a;-webkit-text-stroke:0.15px #1a1a1a;white-space:nowrap">217,808</div>
<div class="abs" style="left:528px;top:571px;width:55px;text-align:right;padding-right:3.5px;font-size:11.8px;line-height:16px;color:#ff5656;-webkit-text-stroke:0.15px #ff5656;white-space:nowrap">26</div>
<div class="abs" style="left:583px;top:571px;width:73px;text-align:right;padding-right:3.0px;font-size:11.8px;line-height:16px;color:#ff5656;-webkit-text-stroke:0.15px #ff5656;white-space:nowrap">-2.3</div>
<div class="abs" style="left:656px;top:571px;width:103px;text-align:right;padding-right:3.3px;font-size:11.8px;line-height:16px;color:#ff5656;-webkit-text-stroke:0.15px #ff5656;white-space:nowrap">-17.0%</div>
<div class="abs" style="left:759px;top:571px;width:85px;text-align:right;padding-right:4.7px;font-size:11.8px;line-height:16px;color:#1a1a1a;-webkit-text-stroke:0.15px #1a1a1a;white-space:nowrap">1,442</div>
<div class="abs" style="left:844px;top:571px;width:79px;text-align:right;padding-right:3.2px;font-size:11.8px;line-height:16px;color:#1a1a1a;-webkit-text-stroke:0.15px #1a1a1a;white-space:nowrap">1,009</div>
<div class="abs" style="left:923px;top:571px;width:82px;text-align:right;padding-right:2.6px;font-size:11.8px;line-height:16px;color:#1a1a1a;-webkit-text-stroke:0.15px #1a1a1a;white-space:nowrap">909</div>
<div class="abs" style="left:1005px;top:571px;width:85px;text-align:right;padding-right:4.2px;font-size:11.8px;line-height:16px;color:#1a1a1a;-webkit-text-stroke:0.15px #1a1a1a;white-space:nowrap">826</div>
<div class="abs" style="left:381px;top:587px;width:709px;height:17px;background:#eeeeee"></div>
<div class="abs" style="left:381px;top:589px;width:60px;text-align:left;padding-left:4px;font-size:11.8px;line-height:16px;color:#1a1a1a;-webkit-text-stroke:0.15px #1a1a1a;white-space:nowrap">VNM</div>
<div class="abs" style="left:441px;top:589px;width:87px;text-align:right;padding-right:3.2px;font-size:11.8px;line-height:16px;color:#1a1a1a;-webkit-text-stroke:0.15px #1a1a1a;white-space:nowrap">183,916</div>
<div class="abs" style="left:528px;top:589px;width:55px;text-align:right;padding-right:3.5px;font-size:11.8px;line-height:16px;color:#ff5656;-webkit-text-stroke:0.15px #ff5656;white-space:nowrap">13</div>
<div class="abs" style="left:583px;top:589px;width:73px;text-align:right;padding-right:3.0px;font-size:11.8px;line-height:16px;color:#ff5656;-webkit-text-stroke:0.15px #ff5656;white-space:nowrap">-2.0</div>
<div class="abs" style="left:656px;top:589px;width:103px;text-align:right;padding-right:3.3px;font-size:11.8px;line-height:16px;color:#ff5656;-webkit-text-stroke:0.15px #ff5656;white-space:nowrap">-3.6%</div>
<div class="abs" style="left:759px;top:589px;width:85px;text-align:right;padding-right:4.7px;font-size:11.8px;line-height:16px;color:#1a1a1a;-webkit-text-stroke:0.15px #1a1a1a;white-space:nowrap">1,494</div>
<div class="abs" style="left:844px;top:589px;width:79px;text-align:right;padding-right:3.2px;font-size:11.8px;line-height:16px;color:#1a1a1a;-webkit-text-stroke:0.15px #1a1a1a;white-space:nowrap">1,951</div>
<div class="abs" style="left:923px;top:589px;width:82px;text-align:right;padding-right:2.6px;font-size:11.8px;line-height:16px;color:#1a1a1a;-webkit-text-stroke:0.15px #1a1a1a;white-space:nowrap">1,672</div>
<div class="abs" style="left:1005px;top:589px;width:85px;text-align:right;padding-right:4.2px;font-size:11.8px;line-height:16px;color:#1a1a1a;-webkit-text-stroke:0.15px #1a1a1a;white-space:nowrap">1,338</div>
<div class="abs" style="left:441px;top:587px;width:1px;height:17px;background:#f6f6f6"></div>
<div class="abs" style="left:528px;top:587px;width:1px;height:17px;background:#f6f6f6"></div>
<div class="abs" style="left:583px;top:587px;width:1px;height:17px;background:#f6f6f6"></div>
<div class="abs" style="left:656px;top:587px;width:1px;height:17px;background:#f6f6f6"></div>
<div class="abs" style="left:759px;top:587px;width:1px;height:17px;background:#f6f6f6"></div>
<div class="abs" style="left:844px;top:587px;width:1px;height:17px;background:#f6f6f6"></div>
<div class="abs" style="left:923px;top:587px;width:1px;height:17px;background:#f6f6f6"></div>
<div class="abs" style="left:1005px;top:587px;width:1px;height:17px;background:#f6f6f6"></div>
<div class="abs" style="left:381px;top:604px;width:709px;height:18px;background:#fff"></div>
<div class="abs" style="left:381px;top:606px;width:60px;text-align:left;padding-left:4px;font-size:11.8px;line-height:16px;color:#1a1a1a;-webkit-text-stroke:0.15px #1a1a1a;white-space:nowrap">TCB</div>
<div class="abs" style="left:441px;top:606px;width:87px;text-align:right;padding-right:3.2px;font-size:11.8px;line-height:16px;color:#1a1a1a;-webkit-text-stroke:0.15px #1a1a1a;white-space:nowrap">180,812</div>
<div class="abs" style="left:528px;top:606px;width:55px;text-align:right;padding-right:3.5px;font-size:11.8px;line-height:16px;color:#ff5656;-webkit-text-stroke:0.15px #ff5656;white-space:nowrap">14</div>
<div class="abs" style="left:583px;top:606px;width:73px;text-align:right;padding-right:3.0px;font-size:11.8px;line-height:16px;color:#ff5656;-webkit-text-stroke:0.15px #ff5656;white-space:nowrap">-2.6</div>
<div class="abs" style="left:656px;top:606px;width:103px;text-align:right;padding-right:3.3px;font-size:11.8px;line-height:16px;color:#ff5656;-webkit-text-stroke:0.15px #ff5656;white-space:nowrap">-12.0%</div>
<div class="abs" style="left:759px;top:606px;width:85px;text-align:right;padding-right:4.7px;font-size:11.8px;line-height:16px;color:#1a1a1a;-webkit-text-stroke:0.15px #1a1a1a;white-space:nowrap">4,671</div>
<div class="abs" style="left:844px;top:606px;width:79px;text-align:right;padding-right:3.2px;font-size:11.8px;line-height:16px;color:#1a1a1a;-webkit-text-stroke:0.15px #1a1a1a;white-space:nowrap">5,885</div>
<div class="abs" style="left:923px;top:606px;width:82px;text-align:right;padding-right:2.6px;font-size:11.8px;line-height:16px;color:#1a1a1a;-webkit-text-stroke:0.15px #1a1a1a;white-space:nowrap">5,103</div>
<div class="abs" style="left:1005px;top:606px;width:85px;text-align:right;padding-right:4.2px;font-size:11.8px;line-height:16px;color:#1a1a1a;-webkit-text-stroke:0.15px #1a1a1a;white-space:nowrap">3,185</div>
<div class="abs" style="left:381px;top:622px;width:709px;height:18px;background:#eeeeee"></div>
<div class="abs" style="left:381px;top:624px;width:60px;text-align:left;padding-left:4px;font-size:11.8px;line-height:16px;color:#1a1a1a;-webkit-text-stroke:0.15px #1a1a1a;white-space:nowrap">BID</div>
<div class="abs" style="left:441px;top:624px;width:87px;text-align:right;padding-right:3.2px;font-size:11.8px;line-height:16px;color:#1a1a1a;-webkit-text-stroke:0.15px #1a1a1a;white-space:nowrap">178,980</div>
<div class="abs" style="left:528px;top:624px;width:55px;text-align:right;padding-right:3.5px;font-size:11.8px;line-height:16px;color:#1a1a1a;-webkit-text-stroke:0.15px #1a1a1a;white-space:nowrap">53</div>
<div class="abs" style="left:583px;top:624px;width:73px;text-align:right;padding-right:3.0px;font-size:11.8px;line-height:16px;color:#2020f0;-webkit-text-stroke:0.15px #2020f0;white-space:nowrap">13.2</div>
<div class="abs" style="left:656px;top:624px;width:103px;text-align:right;padding-right:3.3px;font-size:11.8px;line-height:16px;color:#2020f0;-webkit-text-stroke:0.15px #2020f0;white-space:nowrap">31.3%</div>
<div class="abs" style="left:759px;top:624px;width:85px;text-align:right;padding-right:4.7px;font-size:11.8px;line-height:16px;color:#1a1a1a;-webkit-text-stroke:0.15px #1a1a1a;white-space:nowrap">203</div>
<div class="abs" style="left:844px;top:624px;width:79px;text-align:right;padding-right:3.2px;font-size:11.8px;line-height:16px;color:#1a1a1a;-webkit-text-stroke:0.15px #1a1a1a;white-space:nowrap">785</div>
<div class="abs" style="left:923px;top:624px;width:82px;text-align:right;padding-right:2.6px;font-size:11.8px;line-height:16px;color:#1a1a1a;-webkit-text-stroke:0.15px #1a1a1a;white-space:nowrap">510</div>
<div class="abs" style="left:1005px;top:624px;width:85px;text-align:right;padding-right:4.2px;font-size:11.8px;line-height:16px;color:#1a1a1a;-webkit-text-stroke:0.15px #1a1a1a;white-space:nowrap">461</div>
<div class="abs" style="left:441px;top:622px;width:1px;height:18px;background:#f6f6f6"></div>
<div class="abs" style="left:528px;top:622px;width:1px;height:18px;background:#f6f6f6"></div>
<div class="abs" style="left:583px;top:622px;width:1px;height:18px;background:#f6f6f6"></div>
<div class="abs" style="left:656px;top:622px;width:1px;height:18px;background:#f6f6f6"></div>
<div class="abs" style="left:759px;top:622px;width:1px;height:18px;background:#f6f6f6"></div>
<div class="abs" style="left:844px;top:622px;width:1px;height:18px;background:#f6f6f6"></div>
<div class="abs" style="left:923px;top:622px;width:1px;height:18px;background:#f6f6f6"></div>
<div class="abs" style="left:1005px;top:622px;width:1px;height:18px;background:#f6f6f6"></div>
<div class="abs" style="left:381px;top:640px;width:709px;height:17px;background:#fff"></div>
<div class="abs" style="left:381px;top:642px;width:60px;text-align:left;padding-left:4px;font-size:11.8px;line-height:16px;color:#1a1a1a;-webkit-text-stroke:0.15px #1a1a1a;white-space:nowrap">MSN</div>
<div class="abs" style="left:441px;top:642px;width:87px;text-align:right;padding-right:3.2px;font-size:11.8px;line-height:16px;color:#1a1a1a;-webkit-text-stroke:0.15px #1a1a1a;white-space:nowrap">174,719</div>
<div class="abs" style="left:528px;top:642px;width:55px;text-align:right;padding-right:3.5px;font-size:11.8px;line-height:16px;color:#ff5656;-webkit-text-stroke:0.15px #ff5656;white-space:nowrap">35</div>
<div class="abs" style="left:583px;top:642px;width:73px;text-align:right;padding-right:3.0px;font-size:11.8px;line-height:16px;color:#2020f0;-webkit-text-stroke:0.15px #2020f0;white-space:nowrap">3.5</div>
<div class="abs" style="left:656px;top:642px;width:103px;text-align:right;padding-right:3.3px;font-size:11.8px;line-height:16px;color:#2020f0;-webkit-text-stroke:0.15px #2020f0;white-space:nowrap">5.6%</div>
<div class="abs" style="left:759px;top:642px;width:85px;text-align:right;padding-right:4.7px;font-size:11.8px;line-height:16px;color:#1a1a1a;-webkit-text-stroke:0.15px #1a1a1a;white-space:nowrap">818</div>
<div class="abs" style="left:844px;top:642px;width:79px;text-align:right;padding-right:3.2px;font-size:11.8px;line-height:16px;color:#1a1a1a;-webkit-text-stroke:0.15px #1a1a1a;white-space:nowrap">994</div>
<div class="abs" style="left:923px;top:642px;width:82px;text-align:right;padding-right:2.6px;font-size:11.8px;line-height:16px;color:#1a1a1a;-webkit-text-stroke:0.15px #1a1a1a;white-space:nowrap">1,140</div>
<div class="abs" style="left:1005px;top:642px;width:85px;text-align:right;padding-right:4.2px;font-size:11.8px;line-height:16px;color:#1a1a1a;-webkit-text-stroke:0.15px #1a1a1a;white-space:nowrap">963</div>
<div class="abs" style="left:381px;top:657px;width:709px;height:18px;background:#eeeeee"></div>
<div class="abs" style="left:381px;top:659px;width:60px;text-align:left;padding-left:4px;font-size:11.8px;line-height:16px;color:#1a1a1a;-webkit-text-stroke:0.15px #1a1a1a;white-space:nowrap">GVR</div>
<div class="abs" style="left:441px;top:659px;width:87px;text-align:right;padding-right:3.2px;font-size:11.8px;line-height:16px;color:#1a1a1a;-webkit-text-stroke:0.15px #1a1a1a;white-space:nowrap">159,400</div>
<div class="abs" style="left:528px;top:659px;width:55px;text-align:right;padding-right:3.5px;font-size:11.8px;line-height:16px;color:#ff5656;-webkit-text-stroke:0.15px #ff5656;white-space:nowrap">33</div>
<div class="abs" style="left:583px;top:659px;width:73px;text-align:right;padding-right:3.0px;font-size:11.8px;line-height:16px;color:#2020f0;-webkit-text-stroke:0.15px #2020f0;white-space:nowrap">5.3</div>
<div class="abs" style="left:656px;top:659px;width:103px;text-align:right;padding-right:3.3px;font-size:11.8px;line-height:16px;color:#ff5656;-webkit-text-stroke:0.15px #ff5656;white-space:nowrap">-6.4%</div>
<div class="abs" style="left:759px;top:659px;width:85px;text-align:right;padding-right:4.7px;font-size:11.8px;line-height:16px;color:#1a1a1a;-webkit-text-stroke:0.15px #1a1a1a;white-space:nowrap">1,096</div>
<div class="abs" style="left:844px;top:659px;width:79px;text-align:right;padding-right:3.2px;font-size:11.8px;line-height:16px;color:#1a1a1a;-webkit-text-stroke:0.15px #1a1a1a;white-space:nowrap">1,221</div>
<div class="abs" style="left:923px;top:659px;width:82px;text-align:right;padding-right:2.6px;font-size:11.8px;line-height:16px;color:#1a1a1a;-webkit-text-stroke:0.15px #1a1a1a;white-space:nowrap">984</div>
<div class="abs" style="left:1005px;top:659px;width:85px;text-align:right;padding-right:4.2px;font-size:11.8px;line-height:16px;color:#1a1a1a;-webkit-text-stroke:0.15px #1a1a1a;white-space:nowrap">899</div>
<div class="abs" style="left:441px;top:657px;width:1px;height:18px;background:#f6f6f6"></div>
<div class="abs" style="left:528px;top:657px;width:1px;height:18px;background:#f6f6f6"></div>
<div class="abs" style="left:583px;top:657px;width:1px;height:18px;background:#f6f6f6"></div>
<div class="abs" style="left:656px;top:657px;width:1px;height:18px;background:#f6f6f6"></div>
<div class="abs" style="left:759px;top:657px;width:1px;height:18px;background:#f6f6f6"></div>
<div class="abs" style="left:844px;top:657px;width:1px;height:18px;background:#f6f6f6"></div>
<div class="abs" style="left:923px;top:657px;width:1px;height:18px;background:#f6f6f6"></div>
<div class="abs" style="left:1005px;top:657px;width:1px;height:18px;background:#f6f6f6"></div>
<div class="abs" style="left:381px;top:675px;width:709px;height:18px;background:#fff"></div>
<div class="abs" style="left:381px;top:677px;width:60px;text-align:left;padding-left:4px;font-size:11.8px;line-height:16px;color:#1a1a1a;-webkit-text-stroke:0.15px #1a1a1a;white-space:nowrap">VPB</div>
<div class="abs" style="left:441px;top:677px;width:87px;text-align:right;padding-right:3.2px;font-size:11.8px;line-height:16px;color:#1a1a1a;-webkit-text-stroke:0.15px #1a1a1a;white-space:nowrap">157,370</div>
<div class="abs" style="left:528px;top:677px;width:55px;text-align:right;padding-right:3.5px;font-size:11.8px;line-height:16px;color:#ff5656;-webkit-text-stroke:0.15px #ff5656;white-space:nowrap">7</div>
<div class="abs" style="left:583px;top:677px;width:73px;text-align:right;padding-right:3.0px;font-size:11.8px;line-height:16px;color:#ff5656;-webkit-text-stroke:0.15px #ff5656;white-space:nowrap">-7.8</div>
<div class="abs" style="left:656px;top:677px;width:103px;text-align:right;padding-right:3.3px;font-size:11.8px;line-height:16px;color:#2020f0;-webkit-text-stroke:0.15px #2020f0;white-space:nowrap">7.8%</div>
<div class="abs" style="left:759px;top:677px;width:85px;text-align:right;padding-right:4.7px;font-size:11.8px;line-height:16px;color:#1a1a1a;-webkit-text-stroke:0.15px #1a1a1a;white-space:nowrap">1,448</div>
<div class="abs" style="left:844px;top:677px;width:79px;text-align:right;padding-right:3.2px;font-size:11.8px;line-height:16px;color:#1a1a1a;-webkit-text-stroke:0.15px #1a1a1a;white-space:nowrap">1,606</div>
<div class="abs" style="left:923px;top:677px;width:82px;text-align:right;padding-right:2.6px;font-size:11.8px;line-height:16px;color:#1a1a1a;-webkit-text-stroke:0.15px #1a1a1a;white-space:nowrap">1,417</div>
<div class="abs" style="left:1005px;top:677px;width:85px;text-align:right;padding-right:4.2px;font-size:11.8px;line-height:16px;color:#1a1a1a;-webkit-text-stroke:0.15px #1a1a1a;white-space:nowrap">1,814</div>
<div class="abs" style="left:381px;top:693px;width:709px;height:17px;background:#eeeeee"></div>
<div class="abs" style="left:381px;top:695px;width:60px;text-align:left;padding-left:4px;font-size:11.8px;line-height:16px;color:#1a1a1a;-webkit-text-stroke:0.15px #1a1a1a;white-space:nowrap">CTG</div>
<div class="abs" style="left:441px;top:695px;width:87px;text-align:right;padding-right:3.2px;font-size:11.8px;line-height:16px;color:#1a1a1a;-webkit-text-stroke:0.15px #1a1a1a;white-space:nowrap">154,505</div>
<div class="abs" style="left:528px;top:695px;width:55px;text-align:right;padding-right:3.5px;font-size:11.8px;line-height:16px;color:#ff5656;-webkit-text-stroke:0.15px #ff5656;white-space:nowrap">35</div>
<div class="abs" style="left:583px;top:695px;width:73px;text-align:right;padding-right:3.0px;font-size:11.8px;line-height:16px;color:#2020f0;-webkit-text-stroke:0.15px #2020f0;white-space:nowrap">6.5</div>
<div class="abs" style="left:656px;top:695px;width:103px;text-align:right;padding-right:3.3px;font-size:11.8px;line-height:16px;color:#ff5656;-webkit-text-stroke:0.15px #ff5656;white-space:nowrap">-2.5%</div>
<div class="abs" style="left:759px;top:695px;width:85px;text-align:right;padding-right:4.7px;font-size:11.8px;line-height:16px;color:#1a1a1a;-webkit-text-stroke:0.15px #1a1a1a;white-space:nowrap">1,601</div>
<div class="abs" style="left:844px;top:695px;width:79px;text-align:right;padding-right:3.2px;font-size:11.8px;line-height:16px;color:#1a1a1a;-webkit-text-stroke:0.15px #1a1a1a;white-space:nowrap">2,424</div>
<div class="abs" style="left:923px;top:695px;width:82px;text-align:right;padding-right:2.6px;font-size:11.8px;line-height:16px;color:#1a1a1a;-webkit-text-stroke:0.15px #1a1a1a;white-space:nowrap">1,948</div>
<div class="abs" style="left:1005px;top:695px;width:85px;text-align:right;padding-right:4.2px;font-size:11.8px;line-height:16px;color:#1a1a1a;-webkit-text-stroke:0.15px #1a1a1a;white-space:nowrap">1,486</div>
<div class="abs" style="left:441px;top:693px;width:1px;height:17px;background:#f6f6f6"></div>
<div class="abs" style="left:528px;top:693px;width:1px;height:17px;background:#f6f6f6"></div>
<div class="abs" style="left:583px;top:693px;width:1px;height:17px;background:#f6f6f6"></div>
<div class="abs" style="left:656px;top:693px;width:1px;height:17px;background:#f6f6f6"></div>
<div class="abs" style="left:759px;top:693px;width:1px;height:17px;background:#f6f6f6"></div>
<div class="abs" style="left:844px;top:693px;width:1px;height:17px;background:#f6f6f6"></div>
<div class="abs" style="left:923px;top:693px;width:1px;height:17px;background:#f6f6f6"></div>
<div class="abs" style="left:1005px;top:693px;width:1px;height:17px;background:#f6f6f6"></div>
<div class="abs" style="left:381px;top:710px;width:709px;height:18px;background:#fff"></div>
<div class="abs" style="left:381px;top:712px;width:60px;text-align:left;padding-left:4px;font-size:11.8px;line-height:16px;color:#1a1a1a;-webkit-text-stroke:0.15px #1a1a1a;white-space:nowrap">NVL</div>
<div class="abs" style="left:441px;top:712px;width:87px;text-align:right;padding-right:3.2px;font-size:11.8px;line-height:16px;color:#1a1a1a;-webkit-text-stroke:0.15px #1a1a1a;white-space:nowrap">151,339</div>
<div class="abs" style="left:528px;top:712px;width:55px;text-align:right;padding-right:3.5px;font-size:11.8px;line-height:16px;color:#ff5656;-webkit-text-stroke:0.15px #ff5656;white-space:nowrap">24</div>
<div class="abs" style="left:583px;top:712px;width:73px;text-align:right;padding-right:3.0px;font-size:11.8px;line-height:16px;color:#2020f0;-webkit-text-stroke:0.15px #2020f0;white-space:nowrap">1.0</div>
<div class="abs" style="left:656px;top:712px;width:103px;text-align:right;padding-right:3.3px;font-size:11.8px;line-height:16px;color:#ff5656;-webkit-text-stroke:0.15px #ff5656;white-space:nowrap">-14.3%</div>
<div class="abs" style="left:759px;top:712px;width:85px;text-align:right;padding-right:4.7px;font-size:11.8px;line-height:16px;color:#1a1a1a;-webkit-text-stroke:0.15px #1a1a1a;white-space:nowrap">1,804</div>
<div class="abs" style="left:844px;top:712px;width:79px;text-align:right;padding-right:3.2px;font-size:11.8px;line-height:16px;color:#1a1a1a;-webkit-text-stroke:0.15px #1a1a1a;white-space:nowrap">2,462</div>
<div class="abs" style="left:923px;top:712px;width:82px;text-align:right;padding-right:2.6px;font-size:11.8px;line-height:16px;color:#1a1a1a;-webkit-text-stroke:0.15px #1a1a1a;white-space:nowrap">1,517</div>
<div class="abs" style="left:1005px;top:712px;width:85px;text-align:right;padding-right:4.2px;font-size:11.8px;line-height:16px;color:#1a1a1a;-webkit-text-stroke:0.15px #1a1a1a;white-space:nowrap">1,134</div>
<div class="abs" style="left:381px;top:728px;width:709px;height:18px;background:#eeeeee"></div>
<div class="abs" style="left:381px;top:730px;width:60px;text-align:left;padding-left:4px;font-size:11.8px;line-height:16px;color:#1a1a1a;-webkit-text-stroke:0.15px #1a1a1a;white-space:nowrap">SAB</div>
<div class="abs" style="left:441px;top:730px;width:87px;text-align:right;padding-right:3.2px;font-size:11.8px;line-height:16px;color:#1a1a1a;-webkit-text-stroke:0.15px #1a1a1a;white-space:nowrap">107,863</div>
<div class="abs" style="left:528px;top:730px;width:55px;text-align:right;padding-right:3.5px;font-size:11.8px;line-height:16px;color:#ff5656;-webkit-text-stroke:0.15px #ff5656;white-space:nowrap">32</div>
<div class="abs" style="left:583px;top:730px;width:73px;text-align:right;padding-right:3.0px;font-size:11.8px;line-height:16px;color:#2020f0;-webkit-text-stroke:0.15px #2020f0;white-space:nowrap">5.1</div>
<div class="abs" style="left:656px;top:730px;width:103px;text-align:right;padding-right:3.3px;font-size:11.8px;line-height:16px;color:#ff5656;-webkit-text-stroke:0.15px #ff5656;white-space:nowrap">-17.4%</div>
<div class="abs" style="left:759px;top:730px;width:85px;text-align:right;padding-right:4.7px;font-size:11.8px;line-height:16px;color:#1a1a1a;-webkit-text-stroke:0.15px #1a1a1a;white-space:nowrap">78</div>
<div class="abs" style="left:844px;top:730px;width:79px;text-align:right;padding-right:3.2px;font-size:11.8px;line-height:16px;color:#1a1a1a;-webkit-text-stroke:0.15px #1a1a1a;white-space:nowrap">155</div>
<div class="abs" style="left:923px;top:730px;width:82px;text-align:right;padding-right:2.6px;font-size:11.8px;line-height:16px;color:#1a1a1a;-webkit-text-stroke:0.15px #1a1a1a;white-space:nowrap">69</div>
<div class="abs" style="left:1005px;top:730px;width:85px;text-align:right;padding-right:4.2px;font-size:11.8px;line-height:16px;color:#1a1a1a;-webkit-text-stroke:0.15px #1a1a1a;white-space:nowrap">44</div>
<div class="abs" style="left:441px;top:728px;width:1px;height:18px;background:#f6f6f6"></div>
<div class="abs" style="left:528px;top:728px;width:1px;height:18px;background:#f6f6f6"></div>
<div class="abs" style="left:583px;top:728px;width:1px;height:18px;background:#f6f6f6"></div>
<div class="abs" style="left:656px;top:728px;width:1px;height:18px;background:#f6f6f6"></div>
<div class="abs" style="left:759px;top:728px;width:1px;height:18px;background:#f6f6f6"></div>
<div class="abs" style="left:844px;top:728px;width:1px;height:18px;background:#f6f6f6"></div>
<div class="abs" style="left:923px;top:728px;width:1px;height:18px;background:#f6f6f6"></div>
<div class="abs" style="left:1005px;top:728px;width:1px;height:18px;background:#f6f6f6"></div>
<div class="abs" style="left:381px;top:746px;width:709px;height:17px;background:#fff"></div>
<div class="abs" style="left:381px;top:748px;width:60px;text-align:left;padding-left:4px;font-size:11.8px;line-height:16px;color:#1a1a1a;-webkit-text-stroke:0.15px #1a1a1a;white-space:nowrap">MBB</div>
<div class="abs" style="left:441px;top:748px;width:87px;text-align:right;padding-right:3.2px;font-size:11.8px;line-height:16px;color:#1a1a1a;-webkit-text-stroke:0.15px #1a1a1a;white-space:nowrap">106,927</div>
<div class="abs" style="left:528px;top:748px;width:55px;text-align:right;padding-right:3.5px;font-size:11.8px;line-height:16px;color:#ff5656;-webkit-text-stroke:0.15px #ff5656;white-space:nowrap">20</div>
<div class="abs" style="left:583px;top:748px;width:73px;text-align:right;padding-right:3.0px;font-size:11.8px;line-height:16px;color:#ff5656;-webkit-text-stroke:0.15px #ff5656;white-space:nowrap">-0.4</div>
<div class="abs" style="left:656px;top:748px;width:103px;text-align:right;padding-right:3.3px;font-size:11.8px;line-height:16px;color:#2020f0;-webkit-text-stroke:0.15px #2020f0;white-space:nowrap">7.8%</div>
<div class="abs" style="left:759px;top:748px;width:85px;text-align:right;padding-right:4.7px;font-size:11.8px;line-height:16px;color:#1a1a1a;-webkit-text-stroke:0.15px #1a1a1a;white-space:nowrap">1,190</div>
<div class="abs" style="left:844px;top:748px;width:79px;text-align:right;padding-right:3.2px;font-size:11.8px;line-height:16px;color:#1a1a1a;-webkit-text-stroke:0.15px #1a1a1a;white-space:nowrap">1,960</div>
<div class="abs" style="left:923px;top:748px;width:82px;text-align:right;padding-right:2.6px;font-size:11.8px;line-height:16px;color:#1a1a1a;-webkit-text-stroke:0.15px #1a1a1a;white-space:nowrap">1,642</div>
<div class="abs" style="left:1005px;top:748px;width:85px;text-align:right;padding-right:4.2px;font-size:11.8px;line-height:16px;color:#1a1a1a;-webkit-text-stroke:0.15px #1a1a1a;white-space:nowrap">1,492</div>
<div class="abs" style="left:381px;top:763px;width:709px;height:18px;background:#eeeeee"></div>
<div class="abs" style="left:381px;top:765px;width:60px;text-align:left;padding-left:4px;font-size:11.8px;line-height:16px;color:#1a1a1a;-webkit-text-stroke:0.15px #1a1a1a;white-space:nowrap">MWG</div>
<div class="abs" style="left:441px;top:765px;width:87px;text-align:right;padding-right:3.2px;font-size:11.8px;line-height:16px;color:#1a1a1a;-webkit-text-stroke:0.15px #1a1a1a;white-space:nowrap">99,094</div>
<div class="abs" style="left:528px;top:765px;width:55px;text-align:right;padding-right:3.5px;font-size:11.8px;line-height:16px;color:#ff5656;-webkit-text-stroke:0.15px #ff5656;white-space:nowrap">35</div>
<div class="abs" style="left:583px;top:765px;width:73px;text-align:right;padding-right:3.0px;font-size:11.8px;line-height:16px;color:#2020f0;-webkit-text-stroke:0.15px #2020f0;white-space:nowrap">6.4</div>
<div class="abs" style="left:656px;top:765px;width:103px;text-align:right;padding-right:3.3px;font-size:11.8px;line-height:16px;color:#2020f0;-webkit-text-stroke:0.15px #2020f0;white-space:nowrap">13.1%</div>
<div class="abs" style="left:759px;top:765px;width:85px;text-align:right;padding-right:4.7px;font-size:11.8px;line-height:16px;color:#1a1a1a;-webkit-text-stroke:0.15px #1a1a1a;white-space:nowrap">790</div>
<div class="abs" style="left:844px;top:765px;width:79px;text-align:right;padding-right:3.2px;font-size:11.8px;line-height:16px;color:#1a1a1a;-webkit-text-stroke:0.15px #1a1a1a;white-space:nowrap">740</div>
<div class="abs" style="left:923px;top:765px;width:82px;text-align:right;padding-right:2.6px;font-size:11.8px;line-height:16px;color:#1a1a1a;-webkit-text-stroke:0.15px #1a1a1a;white-space:nowrap">1,198</div>
<div class="abs" style="left:1005px;top:765px;width:85px;text-align:right;padding-right:4.2px;font-size:11.8px;line-height:16px;color:#1a1a1a;-webkit-text-stroke:0.15px #1a1a1a;white-space:nowrap">1,144</div>
<div class="abs" style="left:441px;top:763px;width:1px;height:18px;background:#f6f6f6"></div>
<div class="abs" style="left:528px;top:763px;width:1px;height:18px;background:#f6f6f6"></div>
<div class="abs" style="left:583px;top:763px;width:1px;height:18px;background:#f6f6f6"></div>
<div class="abs" style="left:656px;top:763px;width:1px;height:18px;background:#f6f6f6"></div>
<div class="abs" style="left:759px;top:763px;width:1px;height:18px;background:#f6f6f6"></div>
<div class="abs" style="left:844px;top:763px;width:1px;height:18px;background:#f6f6f6"></div>
<div class="abs" style="left:923px;top:763px;width:1px;height:18px;background:#f6f6f6"></div>
<div class="abs" style="left:1005px;top:763px;width:1px;height:18px;background:#f6f6f6"></div>
<div class="abs" style="left:381px;top:781px;width:709px;height:18px;background:#fff"></div>
<div class="abs" style="left:381px;top:783px;width:60px;text-align:left;padding-left:4px;font-size:11.8px;line-height:16px;color:#1a1a1a;-webkit-text-stroke:0.15px #1a1a1a;white-space:nowrap">ACB</div>
<div class="abs" style="left:441px;top:783px;width:87px;text-align:right;padding-right:3.2px;font-size:11.8px;line-height:16px;color:#1a1a1a;-webkit-text-stroke:0.15px #1a1a1a;white-space:nowrap">87,813</div>
<div class="abs" style="left:528px;top:783px;width:55px;text-align:right;padding-right:3.5px;font-size:11.8px;line-height:16px;color:#ff5656;-webkit-text-stroke:0.15px #ff5656;white-space:nowrap">25</div>
<div class="abs" style="left:583px;top:783px;width:73px;text-align:right;padding-right:3.0px;font-size:11.8px;line-height:16px;color:#2020f0;-webkit-text-stroke:0.15px #2020f0;white-space:nowrap">1.6</div>
<div class="abs" style="left:656px;top:783px;width:103px;text-align:right;padding-right:3.3px;font-size:11.8px;line-height:16px;color:#2020f0;-webkit-text-stroke:0.15px #2020f0;white-space:nowrap">1.2%</div>
<div class="abs" style="left:759px;top:783px;width:85px;text-align:right;padding-right:4.7px;font-size:11.8px;line-height:16px;color:#1a1a1a;-webkit-text-stroke:0.15px #1a1a1a;white-space:nowrap">777</div>
<div class="abs" style="left:844px;top:783px;width:79px;text-align:right;padding-right:3.2px;font-size:11.8px;line-height:16px;color:#1a1a1a;-webkit-text-stroke:0.15px #1a1a1a;white-space:nowrap">1,425</div>
<div class="abs" style="left:923px;top:783px;width:82px;text-align:right;padding-right:2.6px;font-size:11.8px;line-height:16px;color:#1a1a1a;-webkit-text-stroke:0.15px #1a1a1a;white-space:nowrap">863</div>
<div class="abs" style="left:1005px;top:783px;width:85px;text-align:right;padding-right:4.2px;font-size:11.8px;line-height:16px;color:#1a1a1a;-webkit-text-stroke:0.15px #1a1a1a;white-space:nowrap">805</div>
<div class="abs" style="left:381px;top:799px;width:709px;height:17px;background:#eeeeee"></div>
<div class="abs" style="left:381px;top:801px;width:60px;text-align:left;padding-left:4px;font-size:11.8px;line-height:16px;color:#1a1a1a;-webkit-text-stroke:0.15px #1a1a1a;white-space:nowrap">FPT</div>
<div class="abs" style="left:441px;top:801px;width:87px;text-align:right;padding-right:3.2px;font-size:11.8px;line-height:16px;color:#1a1a1a;-webkit-text-stroke:0.15px #1a1a1a;white-space:nowrap">87,571</div>
<div class="abs" style="left:528px;top:801px;width:55px;text-align:right;padding-right:3.5px;font-size:11.8px;line-height:16px;color:#ff5656;-webkit-text-stroke:0.15px #ff5656;white-space:nowrap">13</div>
<div class="abs" style="left:583px;top:801px;width:73px;text-align:right;padding-right:3.0px;font-size:11.8px;line-height:16px;color:#ff5656;-webkit-text-stroke:0.15px #ff5656;white-space:nowrap">-2.5</div>
<div class="abs" style="left:656px;top:801px;width:103px;text-align:right;padding-right:3.3px;font-size:11.8px;line-height:16px;color:#2020f0;-webkit-text-stroke:0.15px #2020f0;white-space:nowrap">0.6%</div>
<div class="abs" style="left:759px;top:801px;width:85px;text-align:right;padding-right:4.7px;font-size:11.8px;line-height:16px;color:#1a1a1a;-webkit-text-stroke:0.15px #1a1a1a;white-space:nowrap">1,041</div>
<div class="abs" style="left:844px;top:801px;width:79px;text-align:right;padding-right:3.2px;font-size:11.8px;line-height:16px;color:#1a1a1a;-webkit-text-stroke:0.15px #1a1a1a;white-space:nowrap">1,136</div>
<div class="abs" style="left:923px;top:801px;width:82px;text-align:right;padding-right:2.6px;font-size:11.8px;line-height:16px;color:#1a1a1a;-webkit-text-stroke:0.15px #1a1a1a;white-space:nowrap">912</div>
<div class="abs" style="left:1005px;top:801px;width:85px;text-align:right;padding-right:4.2px;font-size:11.8px;line-height:16px;color:#1a1a1a;-webkit-text-stroke:0.15px #1a1a1a;white-space:nowrap">1,060</div>
<div class="abs" style="left:441px;top:799px;width:1px;height:17px;background:#f6f6f6"></div>
<div class="abs" style="left:528px;top:799px;width:1px;height:17px;background:#f6f6f6"></div>
<div class="abs" style="left:583px;top:799px;width:1px;height:17px;background:#f6f6f6"></div>
<div class="abs" style="left:656px;top:799px;width:1px;height:17px;background:#f6f6f6"></div>
<div class="abs" style="left:759px;top:799px;width:1px;height:17px;background:#f6f6f6"></div>
<div class="abs" style="left:844px;top:799px;width:1px;height:17px;background:#f6f6f6"></div>
<div class="abs" style="left:923px;top:799px;width:1px;height:17px;background:#f6f6f6"></div>
<div class="abs" style="left:1005px;top:799px;width:1px;height:17px;background:#f6f6f6"></div>
<div class="abs" style="left:381px;top:816px;width:709px;height:18px;background:#fff"></div>
<div class="abs" style="left:381px;top:818px;width:60px;text-align:left;padding-left:4px;font-size:11.8px;line-height:16px;color:#1a1a1a;-webkit-text-stroke:0.15px #1a1a1a;white-space:nowrap">PLX</div>
<div class="abs" style="left:441px;top:818px;width:87px;text-align:right;padding-right:3.2px;font-size:11.8px;line-height:16px;color:#1a1a1a;-webkit-text-stroke:0.15px #1a1a1a;white-space:nowrap">77,506</div>
<div class="abs" style="left:528px;top:818px;width:55px;text-align:right;padding-right:3.5px;font-size:11.8px;line-height:16px;color:#1a1a1a;-webkit-text-stroke:0.15px #1a1a1a;white-space:nowrap">55</div>
<div class="abs" style="left:583px;top:818px;width:73px;text-align:right;padding-right:3.0px;font-size:11.8px;line-height:16px;color:#2020f0;-webkit-text-stroke:0.15px #2020f0;white-space:nowrap">12.1</div>
<div class="abs" style="left:656px;top:818px;width:103px;text-align:right;padding-right:3.3px;font-size:11.8px;line-height:16px;color:#2020f0;-webkit-text-stroke:0.15px #2020f0;white-space:nowrap">26.4%</div>
<div class="abs" style="left:759px;top:818px;width:85px;text-align:right;padding-right:4.7px;font-size:11.8px;line-height:16px;color:#1a1a1a;-webkit-text-stroke:0.15px #1a1a1a;white-space:nowrap">463</div>
<div class="abs" style="left:844px;top:818px;width:79px;text-align:right;padding-right:3.2px;font-size:11.8px;line-height:16px;color:#1a1a1a;-webkit-text-stroke:0.15px #1a1a1a;white-space:nowrap">512</div>
<div class="abs" style="left:923px;top:818px;width:82px;text-align:right;padding-right:2.6px;font-size:11.8px;line-height:16px;color:#1a1a1a;-webkit-text-stroke:0.15px #1a1a1a;white-space:nowrap">1,069</div>
<div class="abs" style="left:1005px;top:818px;width:85px;text-align:right;padding-right:4.2px;font-size:11.8px;line-height:16px;color:#1a1a1a;-webkit-text-stroke:0.15px #1a1a1a;white-space:nowrap">936</div>
<div class="abs" style="left:381px;top:834px;width:709px;height:5px;background:#eeeeee"></div>
<div class="abs" style="left:381px;top:498px;width:709px;height:1px;background:#9adfd9"></div>
<div class="abs" style="left:441px;top:498px;width:1px;height:1px;background:#e8f7f5"></div>
<div class="abs" style="left:528px;top:498px;width:1px;height:1px;background:#e8f7f5"></div>
<div class="abs" style="left:583px;top:498px;width:1px;height:1px;background:#e8f7f5"></div>
<div class="abs" style="left:656px;top:498px;width:1px;height:1px;background:#e8f7f5"></div>
<div class="abs" style="left:759px;top:498px;width:1px;height:1px;background:#e8f7f5"></div>
<div class="abs" style="left:844px;top:498px;width:1px;height:1px;background:#e8f7f5"></div>
<div class="abs" style="left:923px;top:498px;width:1px;height:1px;background:#e8f7f5"></div>
<div class="abs" style="left:1005px;top:498px;width:1px;height:1px;background:#e8f7f5"></div>
<div class="abs" style="left:381px;top:839px;width:709px;height:20px;border:1.5px solid #5fc6bd;background:#fff"></div>
<div class="abs" style="left:381px;top:841px;width:60px;text-align:left;padding-left:4px;font-size:12px;line-height:16px;font-weight:bold;color:#222;white-space:nowrap"><span style="display:inline-block;transform:scaleX(1.0);transform-origin:0 0">Tổng</span></div>
<div class="abs" style="left:441px;top:841px;width:87px;text-align:right;padding-right:3.2px;font-size:12px;line-height:16px;font-weight:bold;color:#222;white-space:nowrap"><span style="display:inline-block;transform:scaleX(1.15);transform-origin:100% 0">5,746,064</span></div>
<div class="abs" style="left:583px;top:841px;width:73px;text-align:right;padding-right:3.0px;font-size:12px;line-height:16px;font-weight:bold;color:#222;white-space:nowrap"><span style="display:inline-block;transform:scaleX(1.15);transform-origin:100% 0">7,644.8</span></div>
<div class="abs" style="left:656px;top:841px;width:103px;text-align:right;padding-right:3.3px;font-size:12px;line-height:16px;font-weight:bold;color:#222;white-space:nowrap"><span style="display:inline-block;transform:scaleX(1.15);transform-origin:100% 0">8.4%</span></div>
<div class="abs" style="left:759px;top:841px;width:85px;text-align:right;padding-right:4.7px;font-size:12px;line-height:16px;font-weight:bold;color:#222;white-space:nowrap"><span style="display:inline-block;transform:scaleX(1.15);transform-origin:100% 0">114,769</span></div>
<div class="abs" style="left:844px;top:841px;width:79px;text-align:right;padding-right:3.2px;font-size:12px;line-height:16px;font-weight:bold;color:#222;white-space:nowrap"><span style="display:inline-block;transform:scaleX(1.15);transform-origin:100% 0">153,663</span></div>
<div class="abs" style="left:923px;top:841px;width:82px;text-align:right;padding-right:2.6px;font-size:12px;line-height:16px;font-weight:bold;color:#222;white-space:nowrap"><span style="display:inline-block;transform:scaleX(1.15);transform-origin:100% 0">146,018</span></div>
<div class="abs" style="left:1005px;top:841px;width:85px;text-align:right;padding-right:4.2px;font-size:12px;line-height:16px;font-weight:bold;color:#222;white-space:nowrap"><span style="display:inline-block;transform:scaleX(1.15);transform-origin:100% 0">146,141</span></div>
<div class="abs" style="left:1094px;top:458px;width:5px;height:398px;background:#f0f0f0"></div>
<div class="abs" style="left:1094px;top:475px;width:5px;height:16px;background:#c8c8c8"></div>
<svg class="abs" style="left:1094px;top:464px" width="6" height="4" viewBox="0 0 6 4"><path d="M0.5 3.5 L3 1 L5.5 3.5" fill="none" stroke="#555" stroke-width="1"/></svg>
<svg class="abs" style="left:1094px;top:843px" width="6" height="4" viewBox="0 0 6 4"><path d="M0.5 0.5 L3 3 L5.5 0.5" fill="none" stroke="#555" stroke-width="1"/></svg>
<div class="abs" style="left:1102px;top:454px;width:95px;height:73px;border:1px solid #d8d8d8;border-left:none;background:#fff"><div class="abs" style="left:9px;top:5px;font-size:9.5px;line-height:11px;color:#222;-webkit-text-stroke:0.1px #222;white-space:nowrap">Sàn</div><div class="abs" style="left:9px;top:21.4px;width:10px;height:9px;border:1px solid #d8d8d8;background:#fff"></div><div class="abs" style="left:25px;top:20.4px;font-size:9.5px;line-height:11px;color:#333;-webkit-text-stroke:0.1px #333;white-space:nowrap">HNX</div><div class="abs" style="left:9px;top:35.9px;width:10px;height:9px;border:1px solid #222;background:#222"></div><div class="abs" style="left:25px;top:34.9px;font-size:9.5px;line-height:11px;color:#333;-webkit-text-stroke:0.1px #333;white-space:nowrap">HOSE</div><div class="abs" style="left:9px;top:50.4px;width:10px;height:9px;border:1px solid #d8d8d8;background:#fff"></div><div class="abs" style="left:25px;top:49.4px;font-size:9.5px;line-height:11px;color:#333;-webkit-text-stroke:0.1px #333;white-space:nowrap">UpCom</div></div>
<div class="abs" style="left:1102px;top:527px;width:95px;height:103px;border:1px solid #d8d8d8;border-left:none;background:#fff"><div class="abs" style="left:9px;top:5.7px;font-size:9.5px;line-height:11px;color:#222;-webkit-text-stroke:0.1px #222;white-space:nowrap">Vốn hóa</div><div class="abs" style="left:9px;top:21.7px;width:9px;height:8px;border:1px solid #d8d8d8;background:#fff"></div><div class="abs" style="left:23px;top:20.7px;font-size:9px;line-height:11px;color:#333;-webkit-text-stroke:0.1px #333;white-space:nowrap">1. &lt;200 tỷ</div><div class="abs" style="left:9px;top:34.8px;width:9px;height:8px;border:1px solid #d8d8d8;background:#fff"></div><div class="abs" style="left:23px;top:33.8px;font-size:9px;line-height:11px;color:#333;-webkit-text-stroke:0.1px #333;white-space:nowrap">2. 200-500 tỷ</div><div class="abs" style="left:9px;top:47.9px;width:9px;height:8px;border:1px solid #d8d8d8;background:#fff"></div><div class="abs" style="left:23px;top:46.9px;font-size:9px;line-height:11px;color:#333;-webkit-text-stroke:0.1px #333;white-space:nowrap">3. 500-2000 tỷ</div><div class="abs" style="left:9px;top:60.9px;width:9px;height:8px;border:1px solid #d8d8d8;background:#fff"></div><div class="abs" style="left:23px;top:59.9px;font-size:9px;line-height:11px;color:#333;-webkit-text-stroke:0.1px #333;white-space:nowrap">4. 2000-10000 tỷ</div><div class="abs" style="left:9px;top:74.0px;width:9px;height:8px;border:1px solid #d8d8d8;background:#fff"></div><div class="abs" style="left:23px;top:73.0px;font-size:9px;line-height:11px;color:#333;-webkit-text-stroke:0.1px #333;white-space:nowrap">5. &gt;10000 tỷ</div></div>
<div class="abs" style="left:1102px;top:630px;width:95px;height:93px;border:1px solid #d8d8d8;border-left:none;background:#fff"><div class="abs" style="left:9px;top:4.8px;font-size:9.5px;line-height:11px;color:#222;-webkit-text-stroke:0.1px #222;white-space:nowrap">GD TB 20ng</div><div class="abs" style="left:9px;top:21.5px;width:9px;height:8px;border:1px solid #d8d8d8;background:#fff"></div><div class="abs" style="left:23px;top:20.5px;font-size:9px;line-height:11px;color:#333;-webkit-text-stroke:0.1px #333;white-space:nowrap">1. &lt; 10 tỷ</div><div class="abs" style="left:9px;top:34.4px;width:9px;height:8px;border:1px solid #d8d8d8;background:#fff"></div><div class="abs" style="left:23px;top:33.4px;font-size:9px;line-height:11px;color:#333;-webkit-text-stroke:0.1px #333;white-space:nowrap">2. 10-20 tỷ</div><div class="abs" style="left:9px;top:47.3px;width:9px;height:8px;border:1px solid #d8d8d8;background:#fff"></div><div class="abs" style="left:23px;top:46.3px;font-size:9px;line-height:11px;color:#333;-webkit-text-stroke:0.1px #333;white-space:nowrap">3. 20-50 tỷ</div><div class="abs" style="left:9px;top:60.2px;width:9px;height:8px;border:1px solid #d8d8d8;background:#fff"></div><div class="abs" style="left:23px;top:59.2px;font-size:9px;line-height:11px;color:#333;-webkit-text-stroke:0.1px #333;white-space:nowrap">4. &gt;50 tỷ</div></div>
<div class="abs" style="left:45px;top:859px;width:1485px;height:1px;background:#c8c8c8"></div>
<div class="abs" style="left:45px;top:860px;width:1485px;height:39px;background:#eaeaea"></div>
<div class="abs" style="left:45px;top:899px;width:1485px;height:1px;background:#f8f8f8"></div>
<div class="abs" style="left:59px;top:874px;font-size:16px;line-height:18px;color:#111;-webkit-text-stroke:0.2px #111;white-space:nowrap">Microsoft Power BI</div>
<div class="abs" style="left:762px;top:874px;font-size:16px;line-height:18px;color:#111;-webkit-text-stroke:0.2px #111;white-space:nowrap">4 of 6</div>
<svg class="abs" style="left:725px;top:868px" width="120" height="28" viewBox="0 0 120 28"><path d="M15 5.5 L6.3 14 L15 22.5" fill="none" stroke="#222" stroke-width="1.5"/><path d="M100 5.5 L108.7 14 L100 22.5" fill="none" stroke="#222" stroke-width="1.5"/></svg>
<svg class="abs" style="left:1448px;top:866px" width="76" height="28" viewBox="0 0 76 28">
<path d="M6.3 10.5 V21.2 H18.3 V18.8" fill="none" stroke="#222" stroke-width="1.3"/>
<path d="M8.3 18.5 Q9.5 11 17.6 10.2 V6.5 L22.7 12 L17.6 17.5 V14 Q11.5 13.8 8.3 18.5 Z" fill="none" stroke="#222" stroke-width="1.2" stroke-linejoin="round"/>
<path d="M52.5 21.8 L67 7.5 M52.3 15.8 V22 H58.5 M61 7.2 H67.3 V13.5" fill="none" stroke="#222" stroke-width="1.3"/>
</svg>
</body></html>
